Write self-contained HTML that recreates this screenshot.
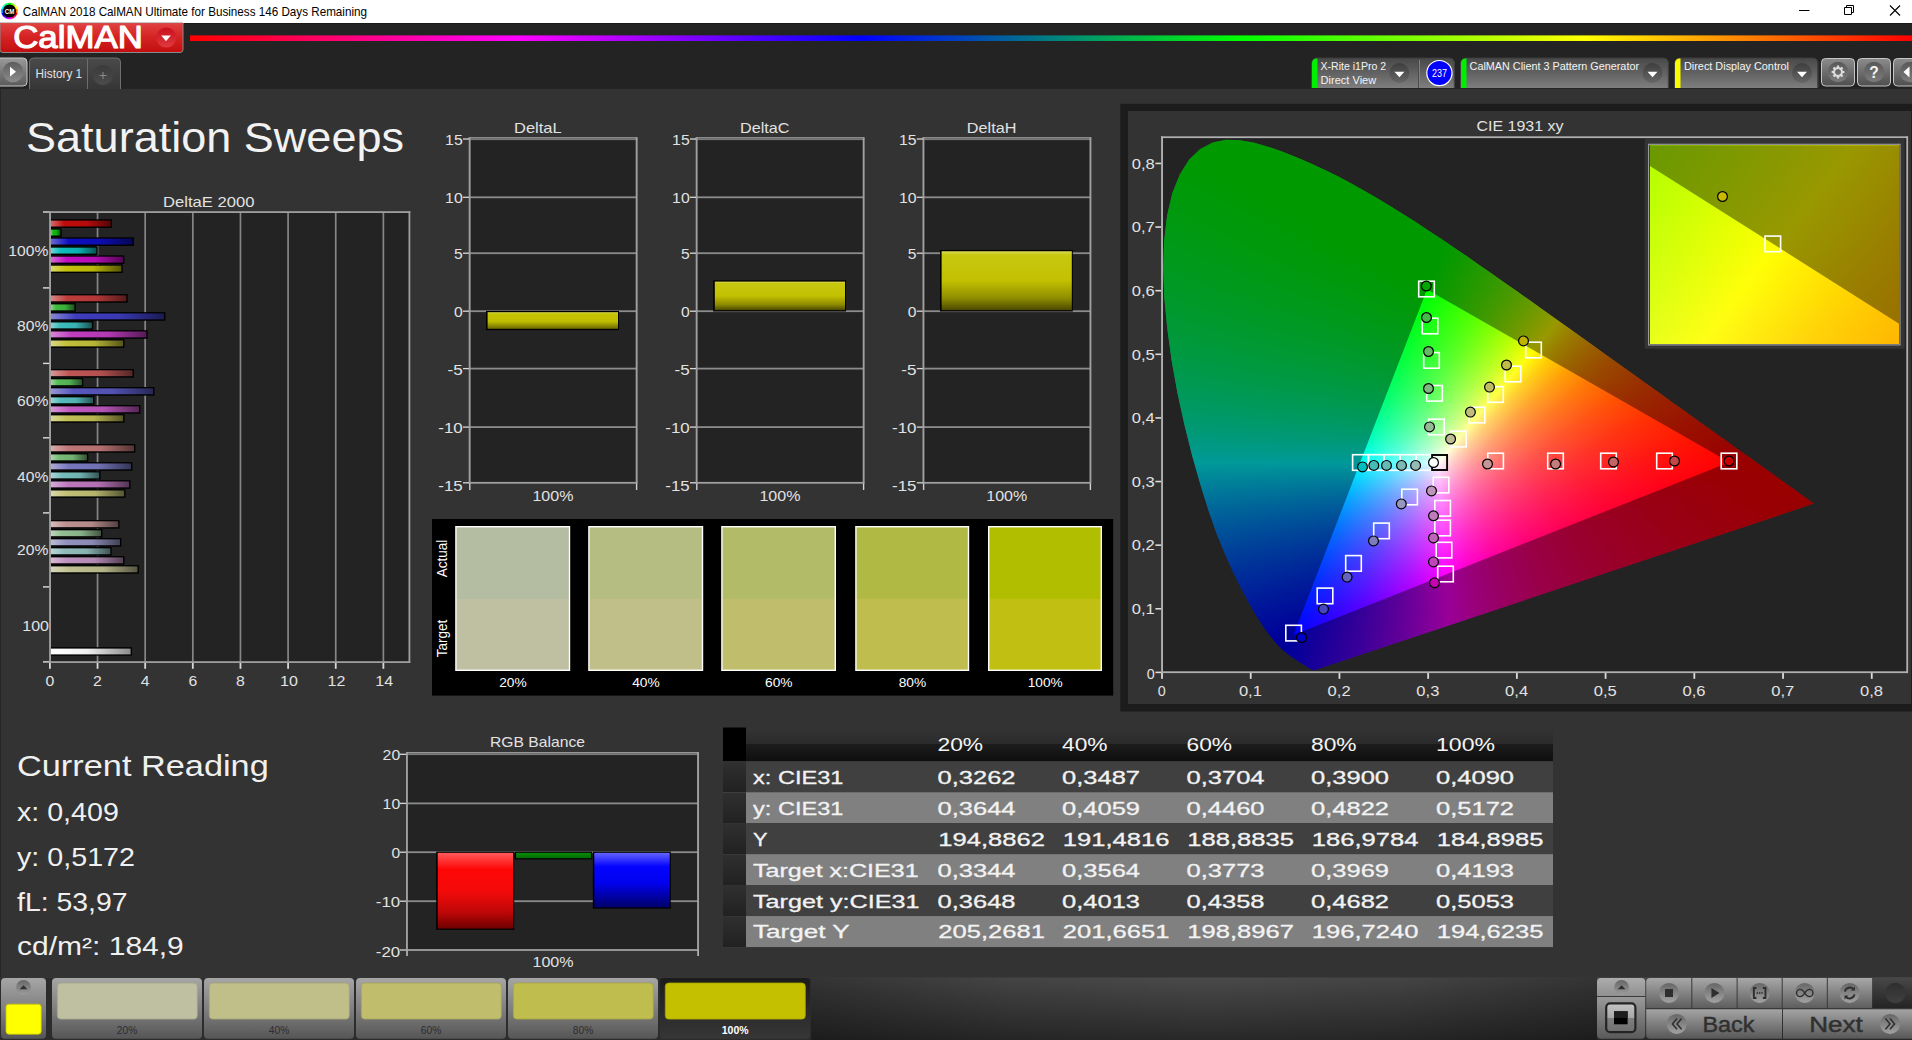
<!DOCTYPE html>
<html lang="en"><head><meta charset="utf-8"><title>CalMAN 2018 - Saturation Sweeps</title>
<style>
html,body{margin:0;padding:0;background:#333;}
body{width:1912px;height:1040px;overflow:hidden;position:relative;font-family:"Liberation Sans",sans-serif;}
.cg{position:absolute;overflow:hidden;}
.cg i{position:absolute;display:block;height:2px;}
svg text{white-space:pre;}
</style></head><body>
<svg width="1912" height="1040" viewBox="0 0 1912 1040" style="position:absolute;left:0;top:0;" font-family='"Liberation Sans", sans-serif'><defs><linearGradient id="g1" x1="0" y1="0" x2="1" y2="0"><stop offset="0" stop-color="#d76868"/><stop offset="0.22" stop-color="#c00c0c"/><stop offset="0.6" stop-color="#b40b0b"/><stop offset="1" stop-color="#560505"/></linearGradient><linearGradient id="g2" x1="0" y1="0" x2="1" y2="0"><stop offset="0" stop-color="#6ad46a"/><stop offset="0.22" stop-color="#10ba10"/><stop offset="0.6" stop-color="#0fae0f"/><stop offset="1" stop-color="#075307"/></linearGradient><linearGradient id="g3" x1="0" y1="0" x2="1" y2="0"><stop offset="0" stop-color="#6969d6"/><stop offset="0.22" stop-color="#0e0ebe"/><stop offset="0.6" stop-color="#0d0db2"/><stop offset="1" stop-color="#060655"/></linearGradient><linearGradient id="g4" x1="0" y1="0" x2="1" y2="0"><stop offset="0" stop-color="#69d5d5"/><stop offset="0.22" stop-color="#0ebcbc"/><stop offset="0.6" stop-color="#0db0b0"/><stop offset="1" stop-color="#065454"/></linearGradient><linearGradient id="g5" x1="0" y1="0" x2="1" y2="0"><stop offset="0" stop-color="#d769d7"/><stop offset="0.22" stop-color="#c00ec0"/><stop offset="0.6" stop-color="#b40db4"/><stop offset="1" stop-color="#560656"/></linearGradient><linearGradient id="g6" x1="0" y1="0" x2="1" y2="0"><stop offset="0" stop-color="#dad967"/><stop offset="0.22" stop-color="#c4c20a"/><stop offset="0.6" stop-color="#b8b609"/><stop offset="1" stop-color="#585704"/></linearGradient><linearGradient id="g7" x1="0" y1="0" x2="1" y2="0"><stop offset="0" stop-color="#d78686"/><stop offset="0.22" stop-color="#bf3c3c"/><stop offset="0.6" stop-color="#b33838"/><stop offset="1" stop-color="#561b1b"/></linearGradient><linearGradient id="g8" x1="0" y1="0" x2="1" y2="0"><stop offset="0" stop-color="#87d487"/><stop offset="0.22" stop-color="#3ebb3e"/><stop offset="0.6" stop-color="#3baf3b"/><stop offset="1" stop-color="#1c541c"/></linearGradient><linearGradient id="g9" x1="0" y1="0" x2="1" y2="0"><stop offset="0" stop-color="#8787d6"/><stop offset="0.22" stop-color="#3d3dbe"/><stop offset="0.6" stop-color="#3939b2"/><stop offset="1" stop-color="#1b1b55"/></linearGradient><linearGradient id="g10" x1="0" y1="0" x2="1" y2="0"><stop offset="0" stop-color="#87d5d5"/><stop offset="0.22" stop-color="#3dbcbc"/><stop offset="0.6" stop-color="#39b1b1"/><stop offset="1" stop-color="#1b5454"/></linearGradient><linearGradient id="g11" x1="0" y1="0" x2="1" y2="0"><stop offset="0" stop-color="#d787d7"/><stop offset="0.22" stop-color="#bf3dbf"/><stop offset="0.6" stop-color="#b339b3"/><stop offset="1" stop-color="#561b56"/></linearGradient><linearGradient id="g12" x1="0" y1="0" x2="1" y2="0"><stop offset="0" stop-color="#d9d885"/><stop offset="0.22" stop-color="#c2c03a"/><stop offset="0.6" stop-color="#b6b537"/><stop offset="1" stop-color="#57561a"/></linearGradient><linearGradient id="g13" x1="0" y1="0" x2="1" y2="0"><stop offset="0" stop-color="#d79696"/><stop offset="0.22" stop-color="#bf5656"/><stop offset="0.6" stop-color="#b35151"/><stop offset="1" stop-color="#562727"/></linearGradient><linearGradient id="g14" x1="0" y1="0" x2="1" y2="0"><stop offset="0" stop-color="#98d598"/><stop offset="0.22" stop-color="#59bb59"/><stop offset="0.6" stop-color="#53b053"/><stop offset="1" stop-color="#285428"/></linearGradient><linearGradient id="g15" x1="0" y1="0" x2="1" y2="0"><stop offset="0" stop-color="#9797d6"/><stop offset="0.22" stop-color="#5757be"/><stop offset="0.6" stop-color="#5252b2"/><stop offset="1" stop-color="#272755"/></linearGradient><linearGradient id="g16" x1="0" y1="0" x2="1" y2="0"><stop offset="0" stop-color="#97d5d5"/><stop offset="0.22" stop-color="#57bcbc"/><stop offset="0.6" stop-color="#52b1b1"/><stop offset="1" stop-color="#275454"/></linearGradient><linearGradient id="g17" x1="0" y1="0" x2="1" y2="0"><stop offset="0" stop-color="#d797d7"/><stop offset="0.22" stop-color="#bf57bf"/><stop offset="0.6" stop-color="#b352b3"/><stop offset="1" stop-color="#562756"/></linearGradient><linearGradient id="g18" x1="0" y1="0" x2="1" y2="0"><stop offset="0" stop-color="#d8d895"/><stop offset="0.22" stop-color="#c1c055"/><stop offset="0.6" stop-color="#b5b450"/><stop offset="1" stop-color="#575626"/></linearGradient><linearGradient id="g19" x1="0" y1="0" x2="1" y2="0"><stop offset="0" stop-color="#d7aaaa"/><stop offset="0.22" stop-color="#be7676"/><stop offset="0.6" stop-color="#b36f6f"/><stop offset="1" stop-color="#553535"/></linearGradient><linearGradient id="g20" x1="0" y1="0" x2="1" y2="0"><stop offset="0" stop-color="#abd5ab"/><stop offset="0.22" stop-color="#78bc78"/><stop offset="0.6" stop-color="#71b171"/><stop offset="1" stop-color="#365436"/></linearGradient><linearGradient id="g21" x1="0" y1="0" x2="1" y2="0"><stop offset="0" stop-color="#ababd6"/><stop offset="0.22" stop-color="#7777be"/><stop offset="0.6" stop-color="#7070b2"/><stop offset="1" stop-color="#353555"/></linearGradient><linearGradient id="g22" x1="0" y1="0" x2="1" y2="0"><stop offset="0" stop-color="#abd6d6"/><stop offset="0.22" stop-color="#77bdbd"/><stop offset="0.6" stop-color="#70b1b1"/><stop offset="1" stop-color="#355555"/></linearGradient><linearGradient id="g23" x1="0" y1="0" x2="1" y2="0"><stop offset="0" stop-color="#d7abd7"/><stop offset="0.22" stop-color="#be77be"/><stop offset="0.6" stop-color="#b370b3"/><stop offset="1" stop-color="#553555"/></linearGradient><linearGradient id="g24" x1="0" y1="0" x2="1" y2="0"><stop offset="0" stop-color="#d8d7aa"/><stop offset="0.22" stop-color="#c0bf76"/><stop offset="0.6" stop-color="#b4b46e"/><stop offset="1" stop-color="#565635"/></linearGradient><linearGradient id="g25" x1="0" y1="0" x2="1" y2="0"><stop offset="0" stop-color="#d7bbbb"/><stop offset="0.22" stop-color="#be9191"/><stop offset="0.6" stop-color="#b38888"/><stop offset="1" stop-color="#554141"/></linearGradient><linearGradient id="g26" x1="0" y1="0" x2="1" y2="0"><stop offset="0" stop-color="#bbd6bb"/><stop offset="0.22" stop-color="#92bd92"/><stop offset="0.6" stop-color="#89b189"/><stop offset="1" stop-color="#415541"/></linearGradient><linearGradient id="g27" x1="0" y1="0" x2="1" y2="0"><stop offset="0" stop-color="#bbbbd6"/><stop offset="0.22" stop-color="#9292be"/><stop offset="0.6" stop-color="#8989b2"/><stop offset="1" stop-color="#414155"/></linearGradient><linearGradient id="g28" x1="0" y1="0" x2="1" y2="0"><stop offset="0" stop-color="#bbd6d6"/><stop offset="0.22" stop-color="#92bdbd"/><stop offset="0.6" stop-color="#89b2b2"/><stop offset="1" stop-color="#415555"/></linearGradient><linearGradient id="g29" x1="0" y1="0" x2="1" y2="0"><stop offset="0" stop-color="#d7bbd7"/><stop offset="0.22" stop-color="#be92be"/><stop offset="0.6" stop-color="#b389b3"/><stop offset="1" stop-color="#554155"/></linearGradient><linearGradient id="g30" x1="0" y1="0" x2="1" y2="0"><stop offset="0" stop-color="#d7d7ba"/><stop offset="0.22" stop-color="#bfbf91"/><stop offset="0.6" stop-color="#b4b388"/><stop offset="1" stop-color="#565541"/></linearGradient><linearGradient id="g31" x1="0" y1="0" x2="1" y2="0"><stop offset="0" stop-color="#fff"/><stop offset="0.45" stop-color="#f0f0f0"/><stop offset="1" stop-color="#8c8c8c"/></linearGradient><linearGradient id="g32" x1="0" y1="0" x2="1" y2="0"><stop offset="0" stop-color="#ff0000"/><stop offset="0.19" stop-color="#ff00ff"/><stop offset="0.39" stop-color="#0000ff"/><stop offset="0.61" stop-color="#00ff00"/><stop offset="0.81" stop-color="#ffff00"/><stop offset="1" stop-color="#ff0000"/></linearGradient><linearGradient id="g33" x1="0" y1="0" x2="0" y2="1"><stop offset="0" stop-color="#e04444"/><stop offset="0.45" stop-color="#d62424"/><stop offset="1" stop-color="#c20e0e"/></linearGradient><linearGradient id="g34" x1="0" y1="0" x2="0" y2="1"><stop offset="0" stop-color="#c8101c"/><stop offset="1" stop-color="#e03a40"/></linearGradient><linearGradient id="g35" x1="0" y1="0" x2="0" y2="1"><stop offset="0" stop-color="#9a9a9a"/><stop offset="1" stop-color="#5a5a5a"/></linearGradient><linearGradient id="g36" x1="0" y1="0" x2="0" y2="1"><stop offset="0" stop-color="#5c5c5c"/><stop offset="1" stop-color="#8c8c8c"/></linearGradient><linearGradient id="g37" x1="0" y1="0" x2="0" y2="1"><stop offset="0" stop-color="#4a4a4a"/><stop offset="1" stop-color="#363636"/></linearGradient><linearGradient id="g38" x1="0" y1="0" x2="0" y2="1"><stop offset="0" stop-color="#3a3a3a"/><stop offset="1" stop-color="#4c4c4c"/></linearGradient><linearGradient id="g39" x1="0" y1="0" x2="0" y2="1"><stop offset="0" stop-color="#484848"/><stop offset="0.5" stop-color="#626262"/><stop offset="1" stop-color="#7e7e7e"/></linearGradient><linearGradient id="g40" x1="0" y1="0" x2="0" y2="1"><stop offset="0" stop-color="#3e3e3e"/><stop offset="1" stop-color="#666"/></linearGradient><linearGradient id="g41" x1="0" y1="0" x2="0" y2="1"><stop offset="0" stop-color="#484848"/><stop offset="0.5" stop-color="#626262"/><stop offset="1" stop-color="#7e7e7e"/></linearGradient><linearGradient id="g42" x1="0" y1="0" x2="0" y2="1"><stop offset="0" stop-color="#3e3e3e"/><stop offset="1" stop-color="#666"/></linearGradient><linearGradient id="g43" x1="0" y1="0" x2="0" y2="1"><stop offset="0" stop-color="#484848"/><stop offset="0.5" stop-color="#626262"/><stop offset="1" stop-color="#7e7e7e"/></linearGradient><linearGradient id="g44" x1="0" y1="0" x2="0" y2="1"><stop offset="0" stop-color="#3e3e3e"/><stop offset="1" stop-color="#666"/></linearGradient><linearGradient id="g45" x1="0" y1="0" x2="0" y2="1"><stop offset="0" stop-color="#8c8c8c"/><stop offset="1" stop-color="#4e4e4e"/></linearGradient><linearGradient id="g46" x1="0" y1="0" x2="0" y2="1"><stop offset="0" stop-color="#585858"/><stop offset="1" stop-color="#7c7c7c"/></linearGradient><linearGradient id="g47" x1="0" y1="0" x2="0" y2="1"><stop offset="0" stop-color="#8c8c8c"/><stop offset="1" stop-color="#4e4e4e"/></linearGradient><linearGradient id="g48" x1="0" y1="0" x2="0" y2="1"><stop offset="0" stop-color="#585858"/><stop offset="1" stop-color="#7c7c7c"/></linearGradient><linearGradient id="g49" x1="0" y1="0" x2="0" y2="1"><stop offset="0" stop-color="#8c8c8c"/><stop offset="1" stop-color="#4e4e4e"/></linearGradient><linearGradient id="g50" x1="0" y1="0" x2="0" y2="1"><stop offset="0" stop-color="#585858"/><stop offset="1" stop-color="#7c7c7c"/></linearGradient><linearGradient id="g51" x1="0" y1="0" x2="0" y2="1"><stop offset="0" stop-color="#d8d850"/><stop offset="0.12" stop-color="#c6c400"/><stop offset="0.55" stop-color="#c0be00"/><stop offset="1" stop-color="#6a6800"/></linearGradient><linearGradient id="g52" x1="0" y1="0" x2="0" y2="1"><stop offset="0" stop-color="#dcdc58"/><stop offset="0.06" stop-color="#c8c812"/><stop offset="0.5" stop-color="#c2c000"/><stop offset="0.8" stop-color="#8e8c00"/><stop offset="1" stop-color="#4a4800"/></linearGradient><linearGradient id="g53" x1="0" y1="0" x2="0" y2="1"><stop offset="0" stop-color="#dcdc58"/><stop offset="0.06" stop-color="#c8c812"/><stop offset="0.5" stop-color="#c2c000"/><stop offset="0.8" stop-color="#8e8c00"/><stop offset="1" stop-color="#4a4800"/></linearGradient><linearGradient id="g54" x1="0" y1="0" x2="0" y2="1"><stop offset="0" stop-color="#ff5a5a"/><stop offset="0.22" stop-color="#ff0606"/><stop offset="0.5" stop-color="#f40a0a"/><stop offset="0.78" stop-color="#c00808"/><stop offset="1" stop-color="#6e0000"/></linearGradient><linearGradient id="g55" x1="0" y1="0" x2="0" y2="1"><stop offset="0" stop-color="#0a8c0a"/><stop offset="1" stop-color="#006c00"/></linearGradient><linearGradient id="g56" x1="0" y1="0" x2="0" y2="1"><stop offset="0" stop-color="#6464ff"/><stop offset="0.25" stop-color="#0404ff"/><stop offset="0.55" stop-color="#0202ee"/><stop offset="1" stop-color="#00006a"/></linearGradient><linearGradient id="g57" x1="0" y1="0" x2="0" y2="1"><stop offset="0" stop-color="#343434"/><stop offset="0.5" stop-color="#2a2a2a"/><stop offset="0.5" stop-color="#1c1c1c"/><stop offset="1" stop-color="#0e0e0e"/></linearGradient><linearGradient id="g58" x1="0" y1="0" x2="0" y2="1"><stop offset="0" stop-color="#303030"/><stop offset="1" stop-color="#212121"/></linearGradient><linearGradient id="g59" x1="0" y1="0" x2="0" y2="1"><stop offset="0" stop-color="#4a4a4a"/><stop offset="1" stop-color="#282828"/></linearGradient><linearGradient id="g60" x1="0" y1="0" x2="1" y2="0"><stop offset="0" stop-color="#000" stop-opacity="0.3"/><stop offset="0.25" stop-color="#000" stop-opacity="0.08"/><stop offset="0.5" stop-color="#000" stop-opacity="0"/><stop offset="0.75" stop-color="#000" stop-opacity="0.08"/><stop offset="1" stop-color="#000" stop-opacity="0.3"/></linearGradient><linearGradient id="g61" x1="0" y1="0" x2="0" y2="1"><stop offset="0" stop-color="#484848"/><stop offset="1" stop-color="#242424"/></linearGradient><linearGradient id="g62" x1="0" y1="0" x2="0" y2="1"><stop offset="0" stop-color="#a6a6a6"/><stop offset="0.5" stop-color="#808080"/><stop offset="1" stop-color="#565656"/></linearGradient><linearGradient id="g63" x1="0" y1="0" x2="0" y2="1"><stop offset="0" stop-color="#666"/><stop offset="1" stop-color="#9c9c9c"/></linearGradient><linearGradient id="g64" x1="0" y1="0" x2="0" y2="1"><stop offset="0" stop-color="#a6a6a6"/><stop offset="0.5" stop-color="#808080"/><stop offset="1" stop-color="#565656"/></linearGradient><linearGradient id="g65" x1="0" y1="0" x2="0" y2="1"><stop offset="0" stop-color="#a6a6a6"/><stop offset="0.5" stop-color="#808080"/><stop offset="1" stop-color="#565656"/></linearGradient><linearGradient id="g66" x1="0" y1="0" x2="0" y2="1"><stop offset="0" stop-color="#a6a6a6"/><stop offset="0.5" stop-color="#808080"/><stop offset="1" stop-color="#565656"/></linearGradient><linearGradient id="g67" x1="0" y1="0" x2="0" y2="1"><stop offset="0" stop-color="#a6a6a6"/><stop offset="0.5" stop-color="#808080"/><stop offset="1" stop-color="#565656"/></linearGradient><linearGradient id="g68" x1="0" y1="0" x2="0" y2="1"><stop offset="0" stop-color="#1c1c1c"/><stop offset="1" stop-color="#363636"/></linearGradient><linearGradient id="g69" x1="0" y1="0" x2="0" y2="1"><stop offset="0" stop-color="#acacac"/><stop offset="0.3" stop-color="#909090"/><stop offset="0.31" stop-color="#9a9a9a"/><stop offset="1" stop-color="#5a5a5a"/></linearGradient><linearGradient id="g70" x1="0" y1="0" x2="0" y2="1"><stop offset="0" stop-color="#c4c4c4"/><stop offset="0.5" stop-color="#a8a8a8"/><stop offset="0.5" stop-color="#808080"/><stop offset="1" stop-color="#6e6e6e"/></linearGradient><linearGradient id="g71" x1="0" y1="0" x2="0" y2="1"><stop offset="0" stop-color="#a8a8a8"/><stop offset="1" stop-color="#5e5e5e"/></linearGradient><linearGradient id="g72" x1="0" y1="0" x2="0" y2="1"><stop offset="0" stop-color="#666"/><stop offset="1" stop-color="#a2a2a2"/></linearGradient><linearGradient id="g73" x1="0" y1="0" x2="0" y2="1"><stop offset="0" stop-color="#2e2e2e"/><stop offset="1" stop-color="#404040"/></linearGradient><linearGradient id="g74" x1="0" y1="0" x2="0" y2="1"><stop offset="0" stop-color="#a4a4a4"/><stop offset="1" stop-color="#585858"/></linearGradient></defs>
<rect x="0" y="89" width="1912" height="889" fill="#333"/>
<rect x="0" y="89" width="1" height="889" fill="#262626"/>
<text x="26" y="152" font-size="42.5" fill="#f2f2f2" textLength="378" lengthAdjust="spacingAndGlyphs">Saturation Sweeps</text>
<text x="208.7" y="207" font-size="15" fill="#e2e2e2" text-anchor="middle" textLength="91.5" lengthAdjust="spacingAndGlyphs">DeltaE 2000</text>
<rect x="50" y="212" width="359.4" height="450" fill="#232323"/>
<rect x="96.69" y="212" width="1.7" height="450" fill="#868686"/>
<rect x="144.33" y="212" width="1.7" height="450" fill="#868686"/>
<rect x="191.97" y="212" width="1.7" height="450" fill="#868686"/>
<rect x="239.61" y="212" width="1.7" height="450" fill="#868686"/>
<rect x="287.25" y="212" width="1.7" height="450" fill="#868686"/>
<rect x="334.89" y="212" width="1.7" height="450" fill="#868686"/>
<rect x="382.53" y="212" width="1.7" height="450" fill="#868686"/>
<rect x="49" y="211.2" width="361.3" height="1.8" fill="#9e9e9e"/>
<rect x="49" y="661.2" width="361.3" height="1.8" fill="#9e9e9e"/>
<rect x="49.1" y="211.2" width="1.9" height="451.8" fill="#9e9e9e"/>
<rect x="408.5" y="211.2" width="1.8" height="451.8" fill="#9e9e9e"/>
<rect x="43" y="211.3" width="6.2" height="1.4" fill="#dcdcdc"/>
<rect x="43" y="287.2" width="6.2" height="1.4" fill="#dcdcdc"/>
<rect x="43" y="362.7" width="6.2" height="1.4" fill="#dcdcdc"/>
<rect x="43" y="437.1" width="6.2" height="1.4" fill="#dcdcdc"/>
<rect x="43" y="512.2" width="6.2" height="1.4" fill="#dcdcdc"/>
<rect x="43" y="586.2" width="6.2" height="1.4" fill="#dcdcdc"/>
<rect x="43" y="661.2" width="6.2" height="1.4" fill="#dcdcdc"/>
<rect x="49" y="663" width="1.8" height="5.8" fill="#d8d8d8"/>
<text x="49.9" y="686.3" font-size="15.3" fill="#e2e2e2" text-anchor="middle" textLength="8.8" lengthAdjust="spacingAndGlyphs">0</text>
<rect x="96.64" y="663" width="1.8" height="5.8" fill="#d8d8d8"/>
<text x="97.54" y="686.3" font-size="15.3" fill="#e2e2e2" text-anchor="middle" textLength="8.8" lengthAdjust="spacingAndGlyphs">2</text>
<rect x="144.28" y="663" width="1.8" height="5.8" fill="#d8d8d8"/>
<text x="145.18" y="686.3" font-size="15.3" fill="#e2e2e2" text-anchor="middle" textLength="8.8" lengthAdjust="spacingAndGlyphs">4</text>
<rect x="191.92" y="663" width="1.8" height="5.8" fill="#d8d8d8"/>
<text x="192.82" y="686.3" font-size="15.3" fill="#e2e2e2" text-anchor="middle" textLength="8.8" lengthAdjust="spacingAndGlyphs">6</text>
<rect x="239.56" y="663" width="1.8" height="5.8" fill="#d8d8d8"/>
<text x="240.46" y="686.3" font-size="15.3" fill="#e2e2e2" text-anchor="middle" textLength="8.8" lengthAdjust="spacingAndGlyphs">8</text>
<rect x="287.2" y="663" width="1.8" height="5.8" fill="#d8d8d8"/>
<text x="288.9" y="686.3" font-size="15.3" fill="#e2e2e2" text-anchor="middle" textLength="17.8" lengthAdjust="spacingAndGlyphs">10</text>
<rect x="334.84" y="663" width="1.8" height="5.8" fill="#d8d8d8"/>
<text x="336.54" y="686.3" font-size="15.3" fill="#e2e2e2" text-anchor="middle" textLength="17.8" lengthAdjust="spacingAndGlyphs">12</text>
<rect x="382.48" y="663" width="1.8" height="5.8" fill="#d8d8d8"/>
<text x="384.18" y="686.3" font-size="15.3" fill="#e2e2e2" text-anchor="middle" textLength="17.8" lengthAdjust="spacingAndGlyphs">14</text>
<text x="48.3" y="256.3" font-size="15.3" fill="#e2e2e2" text-anchor="end" textLength="40" lengthAdjust="spacingAndGlyphs">100%</text>
<text x="48.3" y="330.7" font-size="15.3" fill="#e2e2e2" text-anchor="end" textLength="31.3" lengthAdjust="spacingAndGlyphs">80%</text>
<text x="48.3" y="405.7" font-size="15.3" fill="#e2e2e2" text-anchor="end" textLength="31.3" lengthAdjust="spacingAndGlyphs">60%</text>
<text x="48.3" y="481.9" font-size="15.3" fill="#e2e2e2" text-anchor="end" textLength="31.3" lengthAdjust="spacingAndGlyphs">40%</text>
<text x="48.3" y="555.1" font-size="15.3" fill="#e2e2e2" text-anchor="end" textLength="31.3" lengthAdjust="spacingAndGlyphs">20%</text>
<text x="49" y="631" font-size="15.3" fill="#e2e2e2" text-anchor="end" textLength="26.7" lengthAdjust="spacingAndGlyphs">100</text>
<rect x="51" y="219.3" width="61" height="8.6" fill="#000"/>
<rect x="51" y="220.6" width="59.6" height="5.9" fill="url(#g1)"/>
<rect x="51" y="228.32" width="10.7" height="8.6" fill="#000"/>
<rect x="51" y="229.62" width="9.3" height="5.9" fill="url(#g2)"/>
<rect x="51" y="237.34" width="82.9" height="8.6" fill="#000"/>
<rect x="51" y="238.64" width="81.5" height="5.9" fill="url(#g3)"/>
<rect x="51" y="246.36" width="46.7" height="8.6" fill="#000"/>
<rect x="51" y="247.66" width="45.3" height="5.9" fill="url(#g4)"/>
<rect x="51" y="255.38" width="73.4" height="8.6" fill="#000"/>
<rect x="51" y="256.68" width="72" height="5.9" fill="url(#g5)"/>
<rect x="51" y="264.4" width="71.7" height="8.6" fill="#000"/>
<rect x="51" y="265.7" width="70.3" height="5.9" fill="url(#g6)"/>
<rect x="51" y="294.1" width="76.7" height="8.6" fill="#000"/>
<rect x="51" y="295.4" width="75.3" height="5.9" fill="url(#g7)"/>
<rect x="51" y="303.12" width="24.8" height="8.6" fill="#000"/>
<rect x="51" y="304.42" width="23.4" height="5.9" fill="url(#g8)"/>
<rect x="51" y="312.14" width="114.4" height="8.6" fill="#000"/>
<rect x="51" y="313.44" width="113" height="5.9" fill="url(#g9)"/>
<rect x="51" y="321.16" width="42.3" height="8.6" fill="#000"/>
<rect x="51" y="322.46" width="40.9" height="5.9" fill="url(#g10)"/>
<rect x="51" y="330.18" width="96.7" height="8.6" fill="#000"/>
<rect x="51" y="331.48" width="95.3" height="5.9" fill="url(#g11)"/>
<rect x="51" y="339.2" width="73.5" height="8.6" fill="#000"/>
<rect x="51" y="340.5" width="72.1" height="5.9" fill="url(#g12)"/>
<rect x="51" y="369" width="82.9" height="8.6" fill="#000"/>
<rect x="51" y="370.3" width="81.5" height="5.9" fill="url(#g13)"/>
<rect x="51" y="378.02" width="32.3" height="8.6" fill="#000"/>
<rect x="51" y="379.32" width="30.9" height="5.9" fill="url(#g14)"/>
<rect x="51" y="387.04" width="103.5" height="8.6" fill="#000"/>
<rect x="51" y="388.34" width="102.1" height="5.9" fill="url(#g15)"/>
<rect x="51" y="396.06" width="43.5" height="8.6" fill="#000"/>
<rect x="51" y="397.36" width="42.1" height="5.9" fill="url(#g16)"/>
<rect x="51" y="405.08" width="89.4" height="8.6" fill="#000"/>
<rect x="51" y="406.38" width="88" height="5.9" fill="url(#g17)"/>
<rect x="51" y="414.1" width="73.5" height="8.6" fill="#000"/>
<rect x="51" y="415.4" width="72.1" height="5.9" fill="url(#g18)"/>
<rect x="51" y="444.1" width="84.4" height="8.6" fill="#000"/>
<rect x="51" y="445.4" width="83" height="5.9" fill="url(#g19)"/>
<rect x="51" y="453.12" width="37.3" height="8.6" fill="#000"/>
<rect x="51" y="454.42" width="35.9" height="5.9" fill="url(#g20)"/>
<rect x="51" y="462.14" width="81.4" height="8.6" fill="#000"/>
<rect x="51" y="463.44" width="80" height="5.9" fill="url(#g21)"/>
<rect x="51" y="471.16" width="49.5" height="8.6" fill="#000"/>
<rect x="51" y="472.46" width="48.1" height="5.9" fill="url(#g22)"/>
<rect x="51" y="480.18" width="79.5" height="8.6" fill="#000"/>
<rect x="51" y="481.48" width="78.1" height="5.9" fill="url(#g23)"/>
<rect x="51" y="489.2" width="74.5" height="8.6" fill="#000"/>
<rect x="51" y="490.5" width="73.1" height="5.9" fill="url(#g24)"/>
<rect x="51" y="520" width="68.5" height="8.6" fill="#000"/>
<rect x="51" y="521.3" width="67.1" height="5.9" fill="url(#g25)"/>
<rect x="51" y="529.02" width="51.4" height="8.6" fill="#000"/>
<rect x="51" y="530.32" width="50" height="5.9" fill="url(#g26)"/>
<rect x="51" y="538.04" width="70.4" height="8.6" fill="#000"/>
<rect x="51" y="539.34" width="69" height="5.9" fill="url(#g27)"/>
<rect x="51" y="547.06" width="60.7" height="8.6" fill="#000"/>
<rect x="51" y="548.36" width="59.3" height="5.9" fill="url(#g28)"/>
<rect x="51" y="556.08" width="73.5" height="8.6" fill="#000"/>
<rect x="51" y="557.38" width="72.1" height="5.9" fill="url(#g29)"/>
<rect x="51" y="565.1" width="87.9" height="8.6" fill="#000"/>
<rect x="51" y="566.4" width="86.5" height="5.9" fill="url(#g30)"/>
<rect x="51" y="647.2" width="80.9" height="8.5" fill="#000"/>
<rect x="51" y="648.6" width="79.6" height="5.8" fill="url(#g31)"/>
<rect x="0" y="0" width="1912" height="23" fill="#fff"/>
<path d="M9.5 11L7.21 3.02A8.3 8.3 0 0 1 11.79 3.02z" fill="#00ff00" />
<path d="M9.5 11L11.51 2.95A8.3 8.3 0 0 1 15.47 5.23z" fill="#7fff00" />
<path d="M9.5 11L15.27 5.03A8.3 8.3 0 0 1 17.55 8.99z" fill="#ffff00" />
<path d="M9.5 11L17.48 8.71A8.3 8.3 0 0 1 17.48 13.29z" fill="#ff7f00" />
<path d="M9.5 11L17.55 13.01A8.3 8.3 0 0 1 15.27 16.97z" fill="#ff0000" />
<path d="M9.5 11L15.47 16.77A8.3 8.3 0 0 1 11.51 19.05z" fill="#ff007f" />
<path d="M9.5 11L11.79 18.98A8.3 8.3 0 0 1 7.21 18.98z" fill="#ff00ff" />
<path d="M9.5 11L7.49 19.05A8.3 8.3 0 0 1 3.53 16.77z" fill="#7f00ff" />
<path d="M9.5 11L3.73 16.97A8.3 8.3 0 0 1 1.45 13.01z" fill="#0000ff" />
<path d="M9.5 11L1.52 13.29A8.3 8.3 0 0 1 1.52 8.71z" fill="#007fff" />
<path d="M9.5 11L1.45 8.99A8.3 8.3 0 0 1 3.73 5.03z" fill="#00ffff" />
<path d="M9.5 11L3.53 5.23A8.3 8.3 0 0 1 7.49 2.95z" fill="#00ff7f" />
<circle cx="9.5" cy="11" r="6.6" fill="#000"/>
<text x="9.5" y="13.6" font-size="7" fill="#fff" text-anchor="middle" textLength="9.5" lengthAdjust="spacingAndGlyphs" font-weight="bold">CM</text>
<text x="22.8" y="16" font-size="12.4" fill="#000" textLength="344.2" lengthAdjust="spacingAndGlyphs">CalMAN 2018 CalMAN Ultimate for Business 146 Days Remaining</text>
<rect x="1799" y="10" width="10.5" height="1" fill="#000"/>
<path d="M1844.5 7.5h7v7h-7z M1846.5 7.5v-2h7v7h-2" fill="none" stroke="#000" stroke-width="1" />
<path d="M1890 5.5l10 10M1900 5.5l-10 10" fill="none" stroke="#000" stroke-width="1.1" />
<rect x="0" y="23" width="1912" height="65.9" fill="#232323"/>
<rect x="0" y="23" width="1912" height="1" fill="#1a1a1a"/>
<rect x="190" y="35.4" width="1722" height="5.6" fill="url(#g32)"/>
<path d="M0 23H183V49.5a3 3 0 0 1 -3 3H3a3 3 0 0 1 -3 -3z" fill="url(#g33)" stroke="#8a8a8a" stroke-width="1" />
<rect x="0" y="23" width="183.5" height="1" fill="#d84a4a"/>
<text x="13.2" y="47.7" font-size="31.6" fill="#fff" textLength="129.6" lengthAdjust="spacingAndGlyphs" stroke="#fff" stroke-width="1.15" stroke-linejoin="round">CalMAN</text>
<circle cx="166.3" cy="37.6" r="10" fill="url(#g34)"/>
<path d="M161.2 35.6h9.6l-4.8 5.6z" fill="#fff" />
<path d="M-2 58H23a4 4 0 0 1 4 4V82a4 4 0 0 1 -4 4H-2z" fill="url(#g35)" stroke="#c8c8c8" stroke-width="1" />
<circle cx="13" cy="72" r="10.3" fill="url(#g36)"/>
<path d="M10 66.8l6 4.9l-6 4.9z" fill="#fff" />
<path d="M29.5 89V62a4 4 0 0 1 4 -4H116.5a4 4 0 0 1 4 4V89" fill="url(#g37)" stroke="#6e6e6e" stroke-width="1" />
<rect x="87" y="59" width="1" height="30" fill="#6e6e6e"/>
<text x="35.6" y="78" font-size="12.6" fill="#e4e4e4" textLength="46.6" lengthAdjust="spacingAndGlyphs">History 1</text>
<circle cx="103" cy="75" r="10" fill="url(#g38)"/>
<path d="M99.5 75.5h7M103 72v7" fill="none" stroke="#8a8a8a" stroke-width="1" />
<path d="M1311.5 88V63a5 5 0 0 1 5 -5H1449.8a5 5 0 0 1 5 5V88z" fill="url(#g39)" />
<path d="M1312 88V63a5 5 0 0 1 5 -5H1449.3a5 5 0 0 1 5 5V88" fill="none" stroke="#3c3c3c" stroke-width="1" />
<path d="M1312 88V63a4.5 4.5 0 0 1 4.5 -4.5H1317.5V88z" fill="#00ee00" />
<text x="1320.6" y="70" font-size="11.6" fill="#f4f4f4" textLength="65.4" lengthAdjust="spacingAndGlyphs">X-Rite i1Pro 2</text>
<text x="1320.6" y="83.8" font-size="11.6" fill="#f4f4f4" textLength="55.6" lengthAdjust="spacingAndGlyphs">Direct View</text>
<circle cx="1399.4" cy="73" r="10" fill="url(#g40)"/>
<path d="M1394.4 71.8h10l-5 5.4z" fill="#fff" />
<rect x="1418" y="60" width="1" height="28" fill="#4a4a4a"/>
<rect x="1419" y="60" width="1" height="28" fill="#808080"/>
<circle cx="1439.4" cy="73.1" r="12.6" fill="#0000ff" stroke="#fff" stroke-width="1.2"/>
<text x="1439.4" y="76.7" font-size="10.2" fill="#fff" text-anchor="middle" textLength="15" lengthAdjust="spacingAndGlyphs">237</text>
<path d="M1460.5 88V63a5 5 0 0 1 5 -5H1663.8a5 5 0 0 1 5 5V88z" fill="url(#g41)" />
<path d="M1461 88V63a5 5 0 0 1 5 -5H1663.3a5 5 0 0 1 5 5V88" fill="none" stroke="#3c3c3c" stroke-width="1" />
<path d="M1461 88V63a4.5 4.5 0 0 1 4.5 -4.5H1466.5V88z" fill="#00ee00" />
<text x="1469.6" y="69.8" font-size="11.6" fill="#f4f4f4" textLength="169.4" lengthAdjust="spacingAndGlyphs">CalMAN Client 3 Pattern Generator</text>
<circle cx="1652.5" cy="73" r="10" fill="url(#g42)"/>
<path d="M1647.5 71.8h10l-5 5.4z" fill="#fff" />
<path d="M1674.5 88V63a5 5 0 0 1 5 -5H1813.2a5 5 0 0 1 5 5V88z" fill="url(#g43)" />
<path d="M1675 88V63a5 5 0 0 1 5 -5H1812.7a5 5 0 0 1 5 5V88" fill="none" stroke="#3c3c3c" stroke-width="1" />
<path d="M1675 88V63a4.5 4.5 0 0 1 4.5 -4.5H1680.5V88z" fill="#fafa00" />
<text x="1684" y="69.8" font-size="11.6" fill="#f4f4f4" textLength="105" lengthAdjust="spacingAndGlyphs">Direct Display Control</text>
<circle cx="1802" cy="73" r="10" fill="url(#g44)"/>
<path d="M1797 71.8h10l-5 5.4z" fill="#fff" />
<rect x="1821.5" y="58.5" width="33" height="27.5" fill="url(#g45)" rx="4" stroke="#c6c6c6" stroke-width="1"/>
<circle cx="1838" cy="72" r="10.2" fill="url(#g46)"/>
<rect x="1857.5" y="58.5" width="33" height="27.5" fill="url(#g47)" rx="4" stroke="#c6c6c6" stroke-width="1"/>
<circle cx="1874" cy="72" r="10.2" fill="url(#g48)"/>
<rect x="1893.5" y="58.5" width="33" height="27.5" fill="url(#g49)" rx="4" stroke="#c6c6c6" stroke-width="1"/>
<circle cx="1910" cy="72" r="10.2" fill="url(#g50)"/>
<path d="M1844.41 70.90L1844.41 73.10L1842.72 73.31L1842.26 74.42L1843.31 75.75L1841.75 77.31L1840.42 76.26L1839.31 76.72L1839.10 78.41L1836.90 78.41L1836.69 76.72L1835.58 76.26L1834.25 77.31L1832.69 75.75L1833.74 74.42L1833.28 73.31L1831.59 73.10L1831.59 70.90L1833.28 70.69L1833.74 69.58L1832.69 68.25L1834.25 66.69L1835.58 67.74L1836.69 67.28L1836.90 65.59L1839.10 65.59L1839.31 67.28L1840.42 67.74L1841.75 66.69L1843.31 68.25L1842.26 69.58L1842.72 70.69z M1838 69a3 3 0 1 0 0.01 0z" fill="#dcdcdc" fill-rule="evenodd"/>
<text x="1874" y="77.9" font-size="15.6" fill="#f4f4f4" text-anchor="middle" font-weight="bold">?</text>
<path d="M1909.5 66.5l-6 5.5l6 5.5z" fill="#fff" />
<rect x="469.3" y="138" width="167.3" height="345" fill="#232323"/>
<rect x="469.3" y="196.4" width="167.3" height="1.8" fill="#8c8c8c"/>
<rect x="469.3" y="252.3" width="167.3" height="1.8" fill="#8c8c8c"/>
<rect x="469.3" y="310.3" width="167.3" height="1.8" fill="#8c8c8c"/>
<rect x="469.3" y="367.7" width="167.3" height="1.8" fill="#8c8c8c"/>
<rect x="469.3" y="426.2" width="167.3" height="1.8" fill="#8c8c8c"/>
<rect x="468.8" y="137.3" width="168.5" height="1.2" fill="#b0b0b0"/>
<rect x="468.8" y="138.7" width="168.5" height="1.4" fill="#7a7a7a"/>
<rect x="468.8" y="481.9" width="168.5" height="1.8" fill="#a0a0a0"/>
<rect x="468.7" y="137.3" width="1.9" height="346.4" fill="#a0a0a0"/>
<rect x="635.7" y="137.3" width="1.9" height="346.4" fill="#a0a0a0"/>
<rect x="469.1" y="483.5" width="1.4" height="6.5" fill="#d0d0d0"/>
<rect x="635.9" y="483.5" width="1.4" height="6.5" fill="#d0d0d0"/>
<rect x="463" y="138.35" width="6" height="1.3" fill="#d8d8d8"/>
<text x="462.7" y="145.1" font-size="14.8" fill="#e2e2e2" text-anchor="end" textLength="17.6" lengthAdjust="spacingAndGlyphs">15</text>
<rect x="463" y="196.65" width="6" height="1.3" fill="#d8d8d8"/>
<text x="462.7" y="203.4" font-size="14.8" fill="#e2e2e2" text-anchor="end" textLength="17.6" lengthAdjust="spacingAndGlyphs">10</text>
<rect x="463" y="252.55" width="6" height="1.3" fill="#d8d8d8"/>
<text x="462.7" y="259.3" font-size="14.8" fill="#e2e2e2" text-anchor="end" textLength="8.7" lengthAdjust="spacingAndGlyphs">5</text>
<rect x="463" y="310.55" width="6" height="1.3" fill="#d8d8d8"/>
<text x="462.7" y="317.3" font-size="14.8" fill="#e2e2e2" text-anchor="end" textLength="8.7" lengthAdjust="spacingAndGlyphs">0</text>
<rect x="463" y="367.95" width="6" height="1.3" fill="#d8d8d8"/>
<text x="462.7" y="374.7" font-size="14.8" fill="#e2e2e2" text-anchor="end" textLength="15.2" lengthAdjust="spacingAndGlyphs">-5</text>
<rect x="463" y="426.45" width="6" height="1.3" fill="#d8d8d8"/>
<text x="462.7" y="433.2" font-size="14.8" fill="#e2e2e2" text-anchor="end" textLength="24.4" lengthAdjust="spacingAndGlyphs">-10</text>
<rect x="463" y="482.15" width="6" height="1.3" fill="#d8d8d8"/>
<text x="462.7" y="490.6" font-size="14.8" fill="#e2e2e2" text-anchor="end" textLength="24.4" lengthAdjust="spacingAndGlyphs">-15</text>
<text x="537.8" y="133.2" font-size="15" fill="#e2e2e2" text-anchor="middle" textLength="47.5" lengthAdjust="spacingAndGlyphs">DeltaL</text>
<text x="552.95" y="500.6" font-size="15" fill="#e2e2e2" text-anchor="middle" textLength="41" lengthAdjust="spacingAndGlyphs">100%</text>
<rect x="486" y="310.9" width="133" height="19.23" fill="#000"/>
<rect x="487.6" y="312.2" width="130.4" height="16.63" fill="url(#g51)"/>
<rect x="696.3" y="138" width="167.3" height="345" fill="#232323"/>
<rect x="696.3" y="196.4" width="167.3" height="1.8" fill="#8c8c8c"/>
<rect x="696.3" y="252.3" width="167.3" height="1.8" fill="#8c8c8c"/>
<rect x="696.3" y="310.3" width="167.3" height="1.8" fill="#8c8c8c"/>
<rect x="696.3" y="367.7" width="167.3" height="1.8" fill="#8c8c8c"/>
<rect x="696.3" y="426.2" width="167.3" height="1.8" fill="#8c8c8c"/>
<rect x="695.8" y="137.3" width="168.5" height="1.2" fill="#b0b0b0"/>
<rect x="695.8" y="138.7" width="168.5" height="1.4" fill="#7a7a7a"/>
<rect x="695.8" y="481.9" width="168.5" height="1.8" fill="#a0a0a0"/>
<rect x="695.7" y="137.3" width="1.9" height="346.4" fill="#a0a0a0"/>
<rect x="862.7" y="137.3" width="1.9" height="346.4" fill="#a0a0a0"/>
<rect x="696.1" y="483.5" width="1.4" height="6.5" fill="#d0d0d0"/>
<rect x="862.9" y="483.5" width="1.4" height="6.5" fill="#d0d0d0"/>
<rect x="690" y="138.35" width="6" height="1.3" fill="#d8d8d8"/>
<text x="689.7" y="145.1" font-size="14.8" fill="#e2e2e2" text-anchor="end" textLength="17.6" lengthAdjust="spacingAndGlyphs">15</text>
<rect x="690" y="196.65" width="6" height="1.3" fill="#d8d8d8"/>
<text x="689.7" y="203.4" font-size="14.8" fill="#e2e2e2" text-anchor="end" textLength="17.6" lengthAdjust="spacingAndGlyphs">10</text>
<rect x="690" y="252.55" width="6" height="1.3" fill="#d8d8d8"/>
<text x="689.7" y="259.3" font-size="14.8" fill="#e2e2e2" text-anchor="end" textLength="8.7" lengthAdjust="spacingAndGlyphs">5</text>
<rect x="690" y="310.55" width="6" height="1.3" fill="#d8d8d8"/>
<text x="689.7" y="317.3" font-size="14.8" fill="#e2e2e2" text-anchor="end" textLength="8.7" lengthAdjust="spacingAndGlyphs">0</text>
<rect x="690" y="367.95" width="6" height="1.3" fill="#d8d8d8"/>
<text x="689.7" y="374.7" font-size="14.8" fill="#e2e2e2" text-anchor="end" textLength="15.2" lengthAdjust="spacingAndGlyphs">-5</text>
<rect x="690" y="426.45" width="6" height="1.3" fill="#d8d8d8"/>
<text x="689.7" y="433.2" font-size="14.8" fill="#e2e2e2" text-anchor="end" textLength="24.4" lengthAdjust="spacingAndGlyphs">-10</text>
<rect x="690" y="482.15" width="6" height="1.3" fill="#d8d8d8"/>
<text x="689.7" y="490.6" font-size="14.8" fill="#e2e2e2" text-anchor="end" textLength="24.4" lengthAdjust="spacingAndGlyphs">-15</text>
<text x="764.8" y="133.2" font-size="15" fill="#e2e2e2" text-anchor="middle" textLength="49.5" lengthAdjust="spacingAndGlyphs">DeltaC</text>
<text x="779.95" y="500.6" font-size="15" fill="#e2e2e2" text-anchor="middle" textLength="41" lengthAdjust="spacingAndGlyphs">100%</text>
<rect x="713.2" y="280.31" width="132.8" height="31.19" fill="#000"/>
<rect x="714.8" y="281.61" width="130.2" height="28.59" fill="url(#g52)"/>
<rect x="923.1" y="138" width="167.3" height="345" fill="#232323"/>
<rect x="923.1" y="196.4" width="167.3" height="1.8" fill="#8c8c8c"/>
<rect x="923.1" y="252.3" width="167.3" height="1.8" fill="#8c8c8c"/>
<rect x="923.1" y="310.3" width="167.3" height="1.8" fill="#8c8c8c"/>
<rect x="923.1" y="367.7" width="167.3" height="1.8" fill="#8c8c8c"/>
<rect x="923.1" y="426.2" width="167.3" height="1.8" fill="#8c8c8c"/>
<rect x="922.6" y="137.3" width="168.5" height="1.2" fill="#b0b0b0"/>
<rect x="922.6" y="138.7" width="168.5" height="1.4" fill="#7a7a7a"/>
<rect x="922.6" y="481.9" width="168.5" height="1.8" fill="#a0a0a0"/>
<rect x="922.5" y="137.3" width="1.9" height="346.4" fill="#a0a0a0"/>
<rect x="1089.5" y="137.3" width="1.9" height="346.4" fill="#a0a0a0"/>
<rect x="922.9" y="483.5" width="1.4" height="6.5" fill="#d0d0d0"/>
<rect x="1089.7" y="483.5" width="1.4" height="6.5" fill="#d0d0d0"/>
<rect x="916.8" y="138.35" width="6" height="1.3" fill="#d8d8d8"/>
<text x="916.5" y="145.1" font-size="14.8" fill="#e2e2e2" text-anchor="end" textLength="17.6" lengthAdjust="spacingAndGlyphs">15</text>
<rect x="916.8" y="196.65" width="6" height="1.3" fill="#d8d8d8"/>
<text x="916.5" y="203.4" font-size="14.8" fill="#e2e2e2" text-anchor="end" textLength="17.6" lengthAdjust="spacingAndGlyphs">10</text>
<rect x="916.8" y="252.55" width="6" height="1.3" fill="#d8d8d8"/>
<text x="916.5" y="259.3" font-size="14.8" fill="#e2e2e2" text-anchor="end" textLength="8.7" lengthAdjust="spacingAndGlyphs">5</text>
<rect x="916.8" y="310.55" width="6" height="1.3" fill="#d8d8d8"/>
<text x="916.5" y="317.3" font-size="14.8" fill="#e2e2e2" text-anchor="end" textLength="8.7" lengthAdjust="spacingAndGlyphs">0</text>
<rect x="916.8" y="367.95" width="6" height="1.3" fill="#d8d8d8"/>
<text x="916.5" y="374.7" font-size="14.8" fill="#e2e2e2" text-anchor="end" textLength="15.2" lengthAdjust="spacingAndGlyphs">-5</text>
<rect x="916.8" y="426.45" width="6" height="1.3" fill="#d8d8d8"/>
<text x="916.5" y="433.2" font-size="14.8" fill="#e2e2e2" text-anchor="end" textLength="24.4" lengthAdjust="spacingAndGlyphs">-10</text>
<rect x="916.8" y="482.15" width="6" height="1.3" fill="#d8d8d8"/>
<text x="916.5" y="490.6" font-size="14.8" fill="#e2e2e2" text-anchor="end" textLength="24.4" lengthAdjust="spacingAndGlyphs">-15</text>
<text x="991.6" y="133.2" font-size="15" fill="#e2e2e2" text-anchor="middle" textLength="49.5" lengthAdjust="spacingAndGlyphs">DeltaH</text>
<text x="1006.75" y="500.6" font-size="15" fill="#e2e2e2" text-anchor="middle" textLength="41" lengthAdjust="spacingAndGlyphs">100%</text>
<rect x="940" y="249.95" width="132.8" height="61.55" fill="#000"/>
<rect x="941.6" y="251.25" width="130.2" height="58.95" fill="url(#g53)"/>
<rect x="432" y="519" width="681.2" height="176.6" fill="#000"/>
<rect x="455.2" y="526" width="115" height="145" fill="#fff"/>
<rect x="456.6" y="527.4" width="112.2" height="71.6" fill="#b4bda2"/>
<rect x="456.6" y="598.8" width="112.2" height="70.8" fill="#bfbfa2"/>
<text x="512.9" y="686.8" font-size="12.6" fill="#fff" text-anchor="middle" textLength="27.5" lengthAdjust="spacingAndGlyphs">20%</text>
<rect x="588.2" y="526" width="115" height="145" fill="#fff"/>
<rect x="589.6" y="527.4" width="112.2" height="71.6" fill="#b5bd83"/>
<rect x="589.6" y="598.8" width="112.2" height="70.8" fill="#c0be89"/>
<text x="645.9" y="686.8" font-size="12.6" fill="#fff" text-anchor="middle" textLength="27.5" lengthAdjust="spacingAndGlyphs">40%</text>
<rect x="721.2" y="526" width="114.8" height="145" fill="#fff"/>
<rect x="722.6" y="527.4" width="112" height="71.6" fill="#b2bc68"/>
<rect x="722.6" y="598.8" width="112" height="70.8" fill="#c0bd6d"/>
<text x="778.8" y="686.8" font-size="12.6" fill="#fff" text-anchor="middle" textLength="27.5" lengthAdjust="spacingAndGlyphs">60%</text>
<rect x="855.2" y="526" width="114" height="145" fill="#fff"/>
<rect x="856.6" y="527.4" width="111.2" height="71.6" fill="#b1b945"/>
<rect x="856.6" y="598.8" width="111.2" height="70.8" fill="#bfbd4d"/>
<text x="912.4" y="686.8" font-size="12.6" fill="#fff" text-anchor="middle" textLength="27.5" lengthAdjust="spacingAndGlyphs">80%</text>
<rect x="988" y="526" width="114" height="145" fill="#fff"/>
<rect x="989.4" y="527.4" width="111.2" height="71.6" fill="#b1be00"/>
<rect x="989.4" y="598.8" width="111.2" height="70.8" fill="#c1bf11"/>
<text x="1045.2" y="686.8" font-size="12.6" fill="#fff" text-anchor="middle" textLength="35" lengthAdjust="spacingAndGlyphs">100%</text>
<text x="0" y="0" font-size="14" fill="#fff" text-anchor="middle" textLength="37.5" lengthAdjust="spacingAndGlyphs" transform="translate(447.2 558.5) rotate(-90)">Actual</text>
<text x="0" y="0" font-size="14" fill="#fff" text-anchor="middle" textLength="37.5" lengthAdjust="spacingAndGlyphs" transform="translate(447.2 638.6) rotate(-90)">Target</text>
<rect x="1120.3" y="103.8" width="800" height="607.7" fill="#1c1c1c"/>
<rect x="1128" y="111" width="783.2" height="593" fill="#333"/>
<text x="1520" y="130.6" font-size="15" fill="#e2e2e2" text-anchor="middle" textLength="87" lengthAdjust="spacingAndGlyphs">CIE 1931 xy</text>
<rect x="1161.2" y="136.4" width="746.6" height="536.6" fill="#232323"/>
<rect x="1155.4" y="671.6" width="6" height="1.6" fill="#dcdcdc"/>
<text x="1154.8" y="679.4" font-size="14.3" fill="#e2e2e2" text-anchor="end">0</text>
<rect x="1155.4" y="607.98" width="6" height="1.6" fill="#dcdcdc"/>
<text x="1154.8" y="613.98" font-size="14.3" fill="#e2e2e2" text-anchor="end" textLength="23" lengthAdjust="spacingAndGlyphs">0,1</text>
<rect x="1155.4" y="544.36" width="6" height="1.6" fill="#dcdcdc"/>
<text x="1154.8" y="550.36" font-size="14.3" fill="#e2e2e2" text-anchor="end" textLength="23" lengthAdjust="spacingAndGlyphs">0,2</text>
<rect x="1155.4" y="480.74" width="6" height="1.6" fill="#dcdcdc"/>
<text x="1154.8" y="486.74" font-size="14.3" fill="#e2e2e2" text-anchor="end" textLength="23" lengthAdjust="spacingAndGlyphs">0,3</text>
<rect x="1155.4" y="417.12" width="6" height="1.6" fill="#dcdcdc"/>
<text x="1154.8" y="423.12" font-size="14.3" fill="#e2e2e2" text-anchor="end" textLength="23" lengthAdjust="spacingAndGlyphs">0,4</text>
<rect x="1155.4" y="353.5" width="6" height="1.6" fill="#dcdcdc"/>
<text x="1154.8" y="359.5" font-size="14.3" fill="#e2e2e2" text-anchor="end" textLength="23" lengthAdjust="spacingAndGlyphs">0,5</text>
<rect x="1155.4" y="289.88" width="6" height="1.6" fill="#dcdcdc"/>
<text x="1154.8" y="295.88" font-size="14.3" fill="#e2e2e2" text-anchor="end" textLength="23" lengthAdjust="spacingAndGlyphs">0,6</text>
<rect x="1155.4" y="226.26" width="6" height="1.6" fill="#dcdcdc"/>
<text x="1154.8" y="232.26" font-size="14.3" fill="#e2e2e2" text-anchor="end" textLength="23" lengthAdjust="spacingAndGlyphs">0,7</text>
<rect x="1155.4" y="162.64" width="6" height="1.6" fill="#dcdcdc"/>
<text x="1154.8" y="168.64" font-size="14.3" fill="#e2e2e2" text-anchor="end" textLength="23" lengthAdjust="spacingAndGlyphs">0,8</text>
<rect x="1161.1" y="673" width="1.8" height="5.8" fill="#dcdcdc"/>
<text x="1161.7" y="695.7" font-size="14.3" fill="#e2e2e2" text-anchor="middle">0</text>
<rect x="1249.82" y="673" width="1.8" height="5.8" fill="#dcdcdc"/>
<text x="1250.42" y="695.7" font-size="14.3" fill="#e2e2e2" text-anchor="middle" textLength="23" lengthAdjust="spacingAndGlyphs">0,1</text>
<rect x="1338.54" y="673" width="1.8" height="5.8" fill="#dcdcdc"/>
<text x="1339.14" y="695.7" font-size="14.3" fill="#e2e2e2" text-anchor="middle" textLength="23" lengthAdjust="spacingAndGlyphs">0,2</text>
<rect x="1427.26" y="673" width="1.8" height="5.8" fill="#dcdcdc"/>
<text x="1427.86" y="695.7" font-size="14.3" fill="#e2e2e2" text-anchor="middle" textLength="23" lengthAdjust="spacingAndGlyphs">0,3</text>
<rect x="1515.98" y="673" width="1.8" height="5.8" fill="#dcdcdc"/>
<text x="1516.58" y="695.7" font-size="14.3" fill="#e2e2e2" text-anchor="middle" textLength="23" lengthAdjust="spacingAndGlyphs">0,4</text>
<rect x="1604.7" y="673" width="1.8" height="5.8" fill="#dcdcdc"/>
<text x="1605.3" y="695.7" font-size="14.3" fill="#e2e2e2" text-anchor="middle" textLength="23" lengthAdjust="spacingAndGlyphs">0,5</text>
<rect x="1693.42" y="673" width="1.8" height="5.8" fill="#dcdcdc"/>
<text x="1694.02" y="695.7" font-size="14.3" fill="#e2e2e2" text-anchor="middle" textLength="23" lengthAdjust="spacingAndGlyphs">0,6</text>
<rect x="1782.14" y="673" width="1.8" height="5.8" fill="#dcdcdc"/>
<text x="1782.74" y="695.7" font-size="14.3" fill="#e2e2e2" text-anchor="middle" textLength="23" lengthAdjust="spacingAndGlyphs">0,7</text>
<rect x="1870.86" y="673" width="1.8" height="5.8" fill="#dcdcdc"/>
<text x="1871.46" y="695.7" font-size="14.3" fill="#e2e2e2" text-anchor="middle" textLength="23" lengthAdjust="spacingAndGlyphs">0,8</text>
<text x="17" y="775.5" font-size="30.4" fill="#f0f0f0" textLength="251.8" lengthAdjust="spacingAndGlyphs">Current Reading</text>
<text x="17" y="821.3" font-size="25" fill="#f0f0f0" textLength="101.8" lengthAdjust="spacingAndGlyphs">x: 0,409</text>
<text x="17" y="865.5" font-size="25" fill="#f0f0f0" textLength="118" lengthAdjust="spacingAndGlyphs">y: 0,5172</text>
<text x="17" y="910.5" font-size="25" fill="#f0f0f0" textLength="110.5" lengthAdjust="spacingAndGlyphs">fL: 53,97</text>
<text x="17" y="955" font-size="25" fill="#f0f0f0" textLength="166.8" lengthAdjust="spacingAndGlyphs">cd/m²: 184,9</text>
<text x="537.5" y="747.1" font-size="15" fill="#e2e2e2" text-anchor="middle" textLength="95" lengthAdjust="spacingAndGlyphs">RGB Balance</text>
<rect x="407" y="753" width="291" height="197" fill="#232323"/>
<rect x="407" y="802.5" width="291" height="1.8" fill="#8c8c8c"/>
<rect x="407" y="851.3" width="291" height="1.8" fill="#8c8c8c"/>
<rect x="407" y="900.3" width="291" height="1.8" fill="#8c8c8c"/>
<rect x="406" y="752.2" width="293" height="1.3" fill="#b0b0b0"/>
<rect x="406" y="753.6" width="293" height="1.5" fill="#7a7a7a"/>
<rect x="406" y="949.1" width="293" height="1.8" fill="#a0a0a0"/>
<rect x="406" y="752.2" width="1.9" height="198.7" fill="#a0a0a0"/>
<rect x="697.1" y="752.2" width="1.9" height="198.7" fill="#a0a0a0"/>
<rect x="406.3" y="950.5" width="1.4" height="5.5" fill="#d0d0d0"/>
<rect x="697.4" y="950.5" width="1.4" height="5.5" fill="#d0d0d0"/>
<rect x="400" y="753.65" width="6" height="1.3" fill="#d8d8d8"/>
<text x="400.2" y="759.7" font-size="14.8" fill="#e2e2e2" text-anchor="end" textLength="17.6" lengthAdjust="spacingAndGlyphs">20</text>
<rect x="400" y="802.75" width="6" height="1.3" fill="#d8d8d8"/>
<text x="400.2" y="808.8" font-size="14.8" fill="#e2e2e2" text-anchor="end" textLength="17.6" lengthAdjust="spacingAndGlyphs">10</text>
<rect x="400" y="851.55" width="6" height="1.3" fill="#d8d8d8"/>
<text x="400.2" y="857.6" font-size="14.8" fill="#e2e2e2" text-anchor="end" textLength="8.7" lengthAdjust="spacingAndGlyphs">0</text>
<rect x="400" y="900.55" width="6" height="1.3" fill="#d8d8d8"/>
<text x="400.2" y="906.6" font-size="14.8" fill="#e2e2e2" text-anchor="end" textLength="24.4" lengthAdjust="spacingAndGlyphs">-10</text>
<rect x="400" y="949.35" width="6" height="1.3" fill="#d8d8d8"/>
<text x="400.2" y="957.2" font-size="14.8" fill="#e2e2e2" text-anchor="end" textLength="24.4" lengthAdjust="spacingAndGlyphs">-20</text>
<text x="553" y="967.1" font-size="15" fill="#e2e2e2" text-anchor="middle" textLength="41" lengthAdjust="spacingAndGlyphs">100%</text>
<rect x="436.2" y="851.6" width="78" height="78.2" fill="#000"/>
<rect x="437.7" y="852.8" width="75.4" height="75.8" fill="url(#g54)"/>
<rect x="514.6" y="851.6" width="77.4" height="7.8" fill="#000"/>
<rect x="516.1" y="852.8" width="74.8" height="5.4" fill="url(#g55)"/>
<rect x="592.8" y="851.6" width="78" height="57" fill="#000"/>
<rect x="594.3" y="852.8" width="75.4" height="54.6" fill="url(#g56)"/>
<rect x="723" y="727.5" width="830" height="33.8" fill="url(#g57)"/>
<rect x="723" y="727.5" width="23" height="33.8" fill="#000"/>
<text x="937.5" y="750.9" font-size="17.6" fill="#f4f4f4" textLength="45.6" lengthAdjust="spacingAndGlyphs">20%</text>
<text x="1062" y="750.9" font-size="17.6" fill="#f4f4f4" textLength="45.6" lengthAdjust="spacingAndGlyphs">40%</text>
<text x="1186.5" y="750.9" font-size="17.6" fill="#f4f4f4" textLength="45.6" lengthAdjust="spacingAndGlyphs">60%</text>
<text x="1311" y="750.9" font-size="17.6" fill="#f4f4f4" textLength="45.6" lengthAdjust="spacingAndGlyphs">80%</text>
<text x="1436" y="750.9" font-size="17.6" fill="#f4f4f4" textLength="59" lengthAdjust="spacingAndGlyphs">100%</text>
<rect x="723" y="761.3" width="830" height="31" fill="#404040"/>
<rect x="723" y="761.3" width="23" height="31" fill="url(#g58)"/>
<text x="753" y="783.7" font-size="18" fill="#f2f2f2" textLength="90.5" lengthAdjust="spacingAndGlyphs" stroke="#f2f2f2" stroke-width=".3">x: CIE31</text>
<text x="937.5" y="783.7" font-size="18" fill="#f2f2f2" textLength="78" lengthAdjust="spacingAndGlyphs" stroke="#f2f2f2" stroke-width=".3">0,3262</text>
<text x="1062" y="783.7" font-size="18" fill="#f2f2f2" textLength="78" lengthAdjust="spacingAndGlyphs" stroke="#f2f2f2" stroke-width=".3">0,3487</text>
<text x="1186.5" y="783.7" font-size="18" fill="#f2f2f2" textLength="78" lengthAdjust="spacingAndGlyphs" stroke="#f2f2f2" stroke-width=".3">0,3704</text>
<text x="1311" y="783.7" font-size="18" fill="#f2f2f2" textLength="78" lengthAdjust="spacingAndGlyphs" stroke="#f2f2f2" stroke-width=".3">0,3900</text>
<text x="1436" y="783.7" font-size="18" fill="#f2f2f2" textLength="78" lengthAdjust="spacingAndGlyphs" stroke="#f2f2f2" stroke-width=".3">0,4090</text>
<rect x="723" y="792.25" width="830" height="31" fill="#808080"/>
<rect x="723" y="792.25" width="23" height="31" fill="url(#g58)"/>
<text x="753" y="814.65" font-size="18" fill="#f2f2f2" textLength="90.5" lengthAdjust="spacingAndGlyphs" stroke="#f2f2f2" stroke-width=".3">y: CIE31</text>
<text x="937.5" y="814.65" font-size="18" fill="#f2f2f2" textLength="78" lengthAdjust="spacingAndGlyphs" stroke="#f2f2f2" stroke-width=".3">0,3644</text>
<text x="1062" y="814.65" font-size="18" fill="#f2f2f2" textLength="78" lengthAdjust="spacingAndGlyphs" stroke="#f2f2f2" stroke-width=".3">0,4059</text>
<text x="1186.5" y="814.65" font-size="18" fill="#f2f2f2" textLength="78" lengthAdjust="spacingAndGlyphs" stroke="#f2f2f2" stroke-width=".3">0,4460</text>
<text x="1311" y="814.65" font-size="18" fill="#f2f2f2" textLength="78" lengthAdjust="spacingAndGlyphs" stroke="#f2f2f2" stroke-width=".3">0,4822</text>
<text x="1436" y="814.65" font-size="18" fill="#f2f2f2" textLength="78" lengthAdjust="spacingAndGlyphs" stroke="#f2f2f2" stroke-width=".3">0,5172</text>
<rect x="723" y="823.2" width="830" height="31" fill="#404040"/>
<rect x="723" y="823.2" width="23" height="31" fill="url(#g58)"/>
<text x="753" y="845.6" font-size="18" fill="#f2f2f2" textLength="14.5" lengthAdjust="spacingAndGlyphs" stroke="#f2f2f2" stroke-width=".3">Y</text>
<text x="938.3" y="845.6" font-size="18" fill="#f2f2f2" textLength="106.6" lengthAdjust="spacingAndGlyphs" stroke="#f2f2f2" stroke-width=".3">194,8862</text>
<text x="1062.8" y="845.6" font-size="18" fill="#f2f2f2" textLength="106.6" lengthAdjust="spacingAndGlyphs" stroke="#f2f2f2" stroke-width=".3">191,4816</text>
<text x="1187.3" y="845.6" font-size="18" fill="#f2f2f2" textLength="106.6" lengthAdjust="spacingAndGlyphs" stroke="#f2f2f2" stroke-width=".3">188,8835</text>
<text x="1311.8" y="845.6" font-size="18" fill="#f2f2f2" textLength="106.6" lengthAdjust="spacingAndGlyphs" stroke="#f2f2f2" stroke-width=".3">186,9784</text>
<text x="1436.8" y="845.6" font-size="18" fill="#f2f2f2" textLength="106.6" lengthAdjust="spacingAndGlyphs" stroke="#f2f2f2" stroke-width=".3">184,8985</text>
<rect x="723" y="854.15" width="830" height="31" fill="#808080"/>
<rect x="723" y="854.15" width="23" height="31" fill="url(#g58)"/>
<text x="753" y="876.55" font-size="18" fill="#f2f2f2" textLength="165.6" lengthAdjust="spacingAndGlyphs" stroke="#f2f2f2" stroke-width=".3">Target x:CIE31</text>
<text x="937.5" y="876.55" font-size="18" fill="#f2f2f2" textLength="78" lengthAdjust="spacingAndGlyphs" stroke="#f2f2f2" stroke-width=".3">0,3344</text>
<text x="1062" y="876.55" font-size="18" fill="#f2f2f2" textLength="78" lengthAdjust="spacingAndGlyphs" stroke="#f2f2f2" stroke-width=".3">0,3564</text>
<text x="1186.5" y="876.55" font-size="18" fill="#f2f2f2" textLength="78" lengthAdjust="spacingAndGlyphs" stroke="#f2f2f2" stroke-width=".3">0,3773</text>
<text x="1311" y="876.55" font-size="18" fill="#f2f2f2" textLength="78" lengthAdjust="spacingAndGlyphs" stroke="#f2f2f2" stroke-width=".3">0,3969</text>
<text x="1436" y="876.55" font-size="18" fill="#f2f2f2" textLength="78" lengthAdjust="spacingAndGlyphs" stroke="#f2f2f2" stroke-width=".3">0,4193</text>
<rect x="723" y="885.1" width="830" height="31" fill="#404040"/>
<rect x="723" y="885.1" width="23" height="31" fill="url(#g58)"/>
<text x="753" y="907.5" font-size="18" fill="#f2f2f2" textLength="166.5" lengthAdjust="spacingAndGlyphs" stroke="#f2f2f2" stroke-width=".3">Target y:CIE31</text>
<text x="937.5" y="907.5" font-size="18" fill="#f2f2f2" textLength="78" lengthAdjust="spacingAndGlyphs" stroke="#f2f2f2" stroke-width=".3">0,3648</text>
<text x="1062" y="907.5" font-size="18" fill="#f2f2f2" textLength="78" lengthAdjust="spacingAndGlyphs" stroke="#f2f2f2" stroke-width=".3">0,4013</text>
<text x="1186.5" y="907.5" font-size="18" fill="#f2f2f2" textLength="78" lengthAdjust="spacingAndGlyphs" stroke="#f2f2f2" stroke-width=".3">0,4358</text>
<text x="1311" y="907.5" font-size="18" fill="#f2f2f2" textLength="78" lengthAdjust="spacingAndGlyphs" stroke="#f2f2f2" stroke-width=".3">0,4682</text>
<text x="1436" y="907.5" font-size="18" fill="#f2f2f2" textLength="78" lengthAdjust="spacingAndGlyphs" stroke="#f2f2f2" stroke-width=".3">0,5053</text>
<rect x="723" y="916.05" width="830" height="31" fill="#808080"/>
<rect x="723" y="916.05" width="23" height="31" fill="url(#g58)"/>
<text x="753" y="938.45" font-size="18" fill="#f2f2f2" textLength="96.6" lengthAdjust="spacingAndGlyphs" stroke="#f2f2f2" stroke-width=".3">Target Y</text>
<text x="938.3" y="938.45" font-size="18" fill="#f2f2f2" textLength="106.6" lengthAdjust="spacingAndGlyphs" stroke="#f2f2f2" stroke-width=".3">205,2681</text>
<text x="1062.8" y="938.45" font-size="18" fill="#f2f2f2" textLength="106.6" lengthAdjust="spacingAndGlyphs" stroke="#f2f2f2" stroke-width=".3">201,6651</text>
<text x="1187.3" y="938.45" font-size="18" fill="#f2f2f2" textLength="106.6" lengthAdjust="spacingAndGlyphs" stroke="#f2f2f2" stroke-width=".3">198,8967</text>
<text x="1311.8" y="938.45" font-size="18" fill="#f2f2f2" textLength="106.6" lengthAdjust="spacingAndGlyphs" stroke="#f2f2f2" stroke-width=".3">196,7240</text>
<text x="1436.8" y="938.45" font-size="18" fill="#f2f2f2" textLength="106.6" lengthAdjust="spacingAndGlyphs" stroke="#f2f2f2" stroke-width=".3">194,6235</text>
<rect x="0" y="977.5" width="1912" height="62.5" fill="url(#g59)"/>
<rect x="0" y="977.5" width="811" height="62.5" fill="#2c2c2c"/>
<rect x="811" y="977.5" width="786" height="62.5" fill="url(#g60)"/>
<rect x="1872.1" y="977.5" width="40" height="30.5" fill="url(#g61)"/>
<rect x="1" y="978" width="45" height="60.7" fill="url(#g62)" rx="4"/>
<circle cx="23.5" cy="987.3" r="7.4" fill="url(#g63)"/>
<path d="M19.6 989.2l3.9-4l3.9 4z" fill="#303030" />
<rect x="6" y="1004.2" width="35.2" height="30" fill="#ffff00" rx="3" stroke="#c8c800" stroke-width="0.8"/>
<rect x="52" y="978" width="150" height="60.7" fill="url(#g64)" rx="4"/>
<rect x="57.3" y="983" width="140" height="36.1" fill="#bfbfa2" rx="3.5" stroke="#a4a48b" stroke-width="0.8"/>
<text x="127" y="1033.8" font-size="10.8" fill="#2c2c34" text-anchor="middle" textLength="20.5" lengthAdjust="spacingAndGlyphs">20%</text>
<rect x="204" y="978" width="150" height="60.7" fill="url(#g65)" rx="4"/>
<rect x="209.3" y="983" width="140" height="36.1" fill="#c0be89" rx="3.5" stroke="#a5a375" stroke-width="0.8"/>
<text x="279" y="1033.8" font-size="10.8" fill="#2c2c34" text-anchor="middle" textLength="20.5" lengthAdjust="spacingAndGlyphs">40%</text>
<rect x="356" y="978" width="150" height="60.7" fill="url(#g66)" rx="4"/>
<rect x="361.3" y="983" width="140" height="36.1" fill="#c0bd6d" rx="3.5" stroke="#a5a25d" stroke-width="0.8"/>
<text x="431" y="1033.8" font-size="10.8" fill="#2c2c34" text-anchor="middle" textLength="20.5" lengthAdjust="spacingAndGlyphs">60%</text>
<rect x="508" y="978" width="150" height="60.7" fill="url(#g67)" rx="4"/>
<rect x="513.3" y="983" width="140" height="36.1" fill="#bfbd4d" rx="3.5" stroke="#a4a242" stroke-width="0.8"/>
<text x="583" y="1033.8" font-size="10.8" fill="#2c2c34" text-anchor="middle" textLength="20.5" lengthAdjust="spacingAndGlyphs">80%</text>
<rect x="660" y="978" width="150" height="60.7" fill="url(#g68)" rx="4"/>
<rect x="665.3" y="983" width="140" height="36.1" fill="#c4c000" rx="3.5" stroke="#a8a500" stroke-width="0.8"/>
<text x="735.2" y="1033.8" font-size="10.8" fill="#fff" text-anchor="middle" textLength="26.8" lengthAdjust="spacingAndGlyphs" font-weight="bold">100%</text>
<rect x="1597" y="978" width="48.2" height="60.7" fill="url(#g69)" rx="4"/>
<rect x="1597" y="996" width="48.2" height="1" fill="#3c3c3c"/>
<circle cx="1621.6" cy="987.3" r="7.4" fill="url(#g63)"/>
<path d="M1617.7 989.2l3.9-4l3.9 4z" fill="#303030" />
<rect x="1606.2" y="1003.4" width="29.2" height="28.8" fill="url(#g70)" rx="4" stroke="#242424" stroke-width="2.2"/>
<rect x="1614" y="1011.3" width="13.6" height="13" fill="#000"/>
<rect x="1614" y="1011.3" width="13.6" height="6.6" fill="#1e1e1e"/>
<path d="M1646.2 1007.9V982a4 4 0 0 1 4-4H1872.1V1007.9z" fill="url(#g71)" />
<rect x="1691.3" y="978" width="1" height="30" fill="#3a3a3a"/>
<rect x="1736.6" y="978" width="1" height="30" fill="#3a3a3a"/>
<rect x="1781.7" y="978" width="1" height="30" fill="#3a3a3a"/>
<rect x="1826.8" y="978" width="1" height="30" fill="#3a3a3a"/>
<circle cx="1669" cy="992.9" r="10" fill="url(#g72)"/>
<circle cx="1714.45" cy="992.9" r="10" fill="url(#g72)"/>
<circle cx="1759.65" cy="992.9" r="10" fill="url(#g72)"/>
<circle cx="1804.75" cy="992.9" r="10" fill="url(#g72)"/>
<circle cx="1849.7" cy="992.9" r="10" fill="url(#g72)"/>
<rect x="1665" y="989" width="8" height="8" fill="#2e2e2e"/>
<path d="M1711.45 988l8 5l-8 5z" fill="#2e2e2e" />
<path d="M1756.45 988h-2.6v10h2.6M1762.85 988h2.6v10h-2.6" fill="none" stroke="#2e2e2e" stroke-width="1.9" />
<rect x="1756.65" y="992.2" width="1.4" height="1.6" fill="#2e2e2e"/>
<rect x="1758.95" y="992.2" width="1.4" height="1.6" fill="#2e2e2e"/>
<rect x="1761.25" y="992.2" width="1.4" height="1.6" fill="#2e2e2e"/>
<path d="M1804.75 993c-1.6-2.6-3.4-3.6-4.6-3.6a3.4 3.4 0 0 0 0 7.2c1.2 0 3-1 4.6-3.6c1.6 2.6 3.4 3.6 4.6 3.6a3.4 3.4 0 0 0 0-7.2c-1.2 0-3 1-4.6 3.6z" fill="none" stroke="#2e2e2e" stroke-width="1.4" />
<path d="M1844.9 991.6a5 5 0 0 1 8.6-2.4 M1854.5 994.4a5 5 0 0 1 -8.6 2.4" fill="none" stroke="#2e2e2e" stroke-width="1.9" />
<path d="M1854.9 986.6v4h-4z M1844.5 999.4v-4h4z" fill="#2e2e2e" />
<circle cx="1895.4" cy="993" r="10.2" fill="url(#g73)"/>
<path d="M1646.2 1009.3H1782V1038.7H1650.2a4 4 0 0 1 -4-4z" fill="url(#g74)" />
<rect x="1783" y="1009.3" width="140" height="29.4" fill="url(#g74)"/>
<circle cx="1676.7" cy="1023.9" r="10" fill="url(#g72)"/>
<circle cx="1890.1" cy="1023.9" r="10" fill="url(#g72)"/>
<path d="M1677 1018.6l-4.6 5.3l4.6 5.3M1681.6 1018.6l-4.6 5.3l4.6 5.3" fill="none" stroke="#2e2e2e" stroke-width="1.5" />
<path d="M1885.4 1018.6l4.6 5.3l-4.6 5.3M1890 1018.6l4.6 5.3l-4.6 5.3" fill="none" stroke="#2e2e2e" stroke-width="1.5" />
<text x="1702.4" y="1032" font-size="21.4" fill="#303030" textLength="52" lengthAdjust="spacingAndGlyphs" stroke="#303030" stroke-width=".45">Back</text>
<text x="1809.2" y="1032" font-size="21.4" fill="#303030" textLength="53.6" lengthAdjust="spacingAndGlyphs" stroke="#303030" stroke-width=".45">Next</text>
</svg>
<div class="cg" style="left:1163px;top:138px;width:745px;height:534px;clip-path:polygon(151.9px 532.1px,151.9px 532.1px,151.9px 532.1px,151.8px 532.1px,151.7px 532.1px,151.7px 532.2px,151.6px 532.1px,151.5px 532.1px,151.4px 532.2px,151.3px 532.2px,151.3px 532.2px,151.2px 532.2px,151.0px 532.2px,150.9px 532.2px,150.7px 532.2px,150.6px 532.2px,150.4px 532.2px,150.2px 532.2px,150.0px 532.2px,149.8px 532.1px,149.5px 532.0px,149.2px 531.9px,148.8px 531.7px,148.3px 531.5px,147.8px 531.2px,147.3px 530.9px,146.6px 530.5px,145.9px 530.1px,145.1px 529.6px,144.3px 529.0px,143.3px 528.4px,142.2px 527.7px,141.0px 526.9px,139.7px 526.0px,138.1px 525.1px,136.4px 524.0px,134.5px 522.8px,132.5px 521.5px,130.2px 520.0px,127.8px 518.3px,125.1px 516.3px,122.3px 514.1px,119.2px 511.4px,115.8px 508.0px,111.9px 503.7px,107.5px 498.3px,102.6px 491.9px,97.4px 484.2px,91.6px 474.8px,85.2px 463.6px,78.2px 450.4px,70.6px 434.9px,62.4px 416.9px,53.9px 396.2px,45.6px 372.7px,37.4px 346.6px,29.2px 317.8px,21.5px 287.1px,14.5px 255.2px,8.7px 222.9px,4.3px 190.8px,1.3px 159.7px,0.2px 130.3px,1.1px 102.9px,4.1px 77.6px,9.3px 55.3px,16.8px 36.5px,26.2px 21.6px,37.3px 11.1px,49.8px 4.6px,63.1px 1.8px,77.0px 2.2px,91.3px 4.8px,105.9px 8.9px,120.4px 14.0px,134.7px 19.7px,148.5px 25.7px,162.0px 32.0px,175.3px 38.6px,188.4px 45.5px,201.3px 52.7px,214.3px 60.2px,227.1px 67.9px,239.9px 75.9px,252.7px 84.0px,265.4px 92.4px,278.1px 100.8px,290.9px 109.4px,303.6px 118.1px,316.3px 126.9px,329.0px 135.8px,341.7px 144.7px,354.4px 153.6px,367.1px 162.5px,379.6px 171.5px,392.2px 180.4px,404.6px 189.3px,416.9px 198.1px,429.1px 206.8px,441.2px 215.5px,453.1px 224.0px,464.7px 232.3px,476.2px 240.5px,487.4px 248.5px,498.3px 256.3px,508.8px 263.9px,519.1px 271.2px,528.9px 278.3px,538.1px 284.9px,546.8px 291.1px,555.0px 297.0px,562.9px 302.6px,570.3px 308.0px,577.2px 312.9px,583.6px 317.4px,589.5px 321.6px,594.9px 325.5px,599.9px 329.1px,604.4px 332.3px,608.6px 335.3px,612.4px 338.0px,615.8px 340.5px,619.0px 342.8px,621.9px 344.8px,624.5px 346.7px,627.0px 348.5px,629.3px 350.1px,631.4px 351.6px,633.4px 353.1px,635.2px 354.4px,636.9px 355.6px,638.4px 356.7px,639.8px 357.7px,641.0px 358.5px,642.1px 359.3px,643.1px 360.0px,643.9px 360.6px,644.7px 361.2px,645.4px 361.7px,646.1px 362.1px,646.6px 362.5px,647.0px 362.9px,647.4px 363.1px,647.8px 363.4px,648.1px 363.6px,648.4px 363.8px,648.7px 364.0px,648.9px 364.2px,649.2px 364.4px,649.4px 364.6px,649.7px 364.7px,649.9px 364.9px,650.1px 365.1px,650.3px 365.2px,650.4px 365.3px,650.5px 365.4px,650.6px 365.4px,650.7px 365.5px,650.7px 365.5px,650.8px 365.5px,650.8px 365.6px)">
<i style="top:0px;left:61px;width:10px;background:linear-gradient(90deg,#0f0 0px,#0f0 10px)"></i>
<i style="top:2px;left:51px;width:37px;background:linear-gradient(90deg,#0f0 0px,#0f0 37px)"></i>
<i style="top:4px;left:46px;width:51px;background:linear-gradient(90deg,#0f0 0px,#0f0 51px)"></i>
<i style="top:6px;left:42px;width:62px;background:linear-gradient(90deg,#0f0 0px,#0f0 62px)"></i>
<i style="top:8px;left:38px;width:73px;background:linear-gradient(90deg,#0f0 0px,#0f0 73px)"></i>
<i style="top:10px;left:35px;width:81px;background:linear-gradient(90deg,#0f0 0px,#0f0 81px)"></i>
<i style="top:12px;left:33px;width:89px;background:linear-gradient(90deg,#0f0 0px,#0f0 89px)"></i>
<i style="top:14px;left:31px;width:96px;background:linear-gradient(90deg,#0f0 0px,#0f0 96px)"></i>
<i style="top:16px;left:29px;width:103px;background:linear-gradient(90deg,#0f0 0px,#0f0 103px)"></i>
<i style="top:18px;left:26px;width:111px;background:linear-gradient(90deg,#00ff01 0px,#0f0 111px)"></i>
<i style="top:20px;left:24px;width:117px;background:linear-gradient(90deg,#00ff02 0px,#0f0 116px,#0f0 117px)"></i>
<i style="top:22px;left:23px;width:123px;background:linear-gradient(90deg,#00ff03 0px,#0f0 45px,#0f0 123px)"></i>
<i style="top:24px;left:22px;width:129px;background:linear-gradient(90deg,#00ff04 0px,#0f0 42px,#0f0 129px)"></i>
<i style="top:26px;left:21px;width:134px;background:linear-gradient(90deg,#00ff05 0px,#0f0 42px,#0f0 134px)"></i>
<i style="top:28px;left:19px;width:140px;background:linear-gradient(90deg,#00ff06 0px,#0f0 46px,#0f0 140px)"></i>
<i style="top:30px;left:18px;width:146px;background:linear-gradient(90deg,#00ff07 0px,#0f0 49px,#0f0 146px)"></i>
<i style="top:32px;left:17px;width:151px;background:linear-gradient(90deg,#00ff08 0px,#0f0 53px,#0f0 151px)"></i>
<i style="top:34px;left:16px;width:156px;background:linear-gradient(90deg,#00ff09 0px,#0f0 57px,#0f0 156px)"></i>
<i style="top:36px;left:15px;width:161px;background:linear-gradient(90deg,#00ff0a 0px,#0f0 61px,#0f0 161px)"></i>
<i style="top:38px;left:14px;width:165px;background:linear-gradient(90deg,#00ff0b 0px,#0f0 65px,#0f0 165px)"></i>
<i style="top:40px;left:13px;width:170px;background:linear-gradient(90deg,#00ff0b 0px,#0f0 69px,#0f0 170px)"></i>
<i style="top:42px;left:12px;width:175px;background:linear-gradient(90deg,#00ff0c 0px,#0f0 74px,#0f0 175px)"></i>
<i style="top:44px;left:12px;width:179px;background:linear-gradient(90deg,#00ff0d 0px,#0f0 77px,#0f0 179px)"></i>
<i style="top:46px;left:11px;width:183px;background:linear-gradient(90deg,#00ff0e 0px,#0f0 81px,#0f0 183px)"></i>
<i style="top:48px;left:10px;width:188px;background:linear-gradient(90deg,#00ff0f 0px,#0f0 86px,#0f0 188px)"></i>
<i style="top:50px;left:9px;width:193px;background:linear-gradient(90deg,#00ff10 0px,#0f0 90px,#0f0 193px)"></i>
<i style="top:52px;left:8px;width:197px;background:linear-gradient(90deg,#0f1 0px,#0f0 94px,#0f0 197px)"></i>
<i style="top:54px;left:8px;width:201px;background:linear-gradient(90deg,#00ff12 0px,#0f0 98px,#0f0 201px)"></i>
<i style="top:56px;left:7px;width:205px;background:linear-gradient(90deg,#00ff13 0px,#0f0 102px,#0f0 205px)"></i>
<i style="top:58px;left:7px;width:208px;background:linear-gradient(90deg,#00ff14 0px,#0f0 105px,#0f0 208px)"></i>
<i style="top:60px;left:6px;width:213px;background:linear-gradient(90deg,#00ff15 0px,#0f0 110px,#0f0 213px)"></i>
<i style="top:62px;left:6px;width:216px;background:linear-gradient(90deg,#00ff15 0px,#0f0 113px,#0f0 216px)"></i>
<i style="top:64px;left:5px;width:220px;background:linear-gradient(90deg,#00ff16 0px,#0f0 118px,#0f0 220px)"></i>
<i style="top:66px;left:5px;width:224px;background:linear-gradient(90deg,#00ff17 0px,#0f0 121px,#0f0 224px)"></i>
<i style="top:68px;left:4px;width:228px;background:linear-gradient(90deg,#00ff18 0px,#0f0 126px,#0f0 228px)"></i>
<i style="top:70px;left:4px;width:231px;background:linear-gradient(90deg,#00ff19 0px,#0f0 129px,#0f0 231px)"></i>
<i style="top:72px;left:3px;width:235px;background:linear-gradient(90deg,#00ff1a 0px,#0f0 134px,#0f0 235px)"></i>
<i style="top:74px;left:3px;width:239px;background:linear-gradient(90deg,#00ff1b 0px,#0f0 137px,#0f0 239px)"></i>
<i style="top:76px;left:3px;width:242px;background:linear-gradient(90deg,#00ff1c 0px,#0f0 140px,#0f0 242px)"></i>
<i style="top:78px;left:2px;width:246px;background:linear-gradient(90deg,#00ff1d 0px,#0f0 145px,#0f0 246px)"></i>
<i style="top:80px;left:2px;width:249px;background:linear-gradient(90deg,#00ff1e 0px,#0f0 148px,#0f0 249px)"></i>
<i style="top:82px;left:2px;width:252px;background:linear-gradient(90deg,#00ff1f 0px,#0f0 152px,#0f0 252px)"></i>
<i style="top:84px;left:2px;width:255px;background:linear-gradient(90deg,#00ff1f 0px,#0f0 155px,#0f0 255px)"></i>
<i style="top:86px;left:1px;width:259px;background:linear-gradient(90deg,#00ff21 0px,#0f0 159px,#0f0 259px)"></i>
<i style="top:88px;left:1px;width:262px;background:linear-gradient(90deg,#00ff21 0px,#0f0 163px,#0f0 262px)"></i>
<i style="top:90px;left:1px;width:265px;background:linear-gradient(90deg,#0f2 0px,#0f0 166px,#0f0 265px)"></i>
<i style="top:92px;left:1px;width:268px;background:linear-gradient(90deg,#00ff23 0px,#0f0 170px,#0f0 268px)"></i>
<i style="top:94px;left:0px;width:272px;background:linear-gradient(90deg,#00ff24 0px,#0f0 174px,#0f0 272px)"></i>
<i style="top:96px;left:0px;width:275px;background:linear-gradient(90deg,#00ff25 0px,#0f0 178px,#0f0 275px)"></i>
<i style="top:98px;left:0px;width:278px;background:linear-gradient(90deg,#00ff26 0px,#0f0 181px,#0f0 278px)"></i>
<i style="top:100px;left:0px;width:281px;background:linear-gradient(90deg,#00ff27 0px,#0f0 185px,#0f0 281px)"></i>
<i style="top:102px;left:0px;width:284px;background:linear-gradient(90deg,#00ff28 0px,#0f0 188px,#01ff00 284px)"></i>
<i style="top:104px;left:0px;width:287px;background:linear-gradient(90deg,#00ff29 0px,#0f0 192px,#01ff00 283px,#06ff00 287px)"></i>
<i style="top:106px;left:0px;width:290px;background:linear-gradient(90deg,#00ff2a 0px,#0f0 195px,#01ff00 282px,#0aff00 290px)"></i>
<i style="top:108px;left:0px;width:293px;background:linear-gradient(90deg,#00ff2b 0px,#0f0 199px,#02ff00 282px,#0fff00 293px)"></i>
<i style="top:110px;left:0px;width:296px;background:linear-gradient(90deg,#00ff2c 0px,#00ff01 188px,#02ff00 281px,#13ff00 296px)"></i>
<i style="top:112px;left:0px;width:299px;background:linear-gradient(90deg,#00ff2d 0px,#00ff03 187px,#0f0 226px,#01ff00 280px,#18ff00 299px)"></i>
<i style="top:114px;left:0px;width:302px;background:linear-gradient(90deg,#00ff2e 0px,#00ff04 187px,#0f0 216px,#01ff00 279px,#1dff00 302px)"></i>
<i style="top:116px;left:0px;width:305px;background:linear-gradient(90deg,#00ff2f 0px,#00ff05 186px,#0f0 216px,#02ff00 279px,#21ff00 305px)"></i>
<i style="top:118px;left:0px;width:308px;background:linear-gradient(90deg,#00ff30 0px,#00ff06 186px,#0f0 218px,#02ff00 278px,#26ff00 308px)"></i>
<i style="top:120px;left:0px;width:311px;background:linear-gradient(90deg,#00ff31 0px,#00ff07 185px,#0f0 220px,#02ff00 277px,#2bff00 311px)"></i>
<i style="top:122px;left:0px;width:314px;background:linear-gradient(90deg,#00ff32 0px,#00ff08 185px,#0f0 223px,#01ff00 276px,#30ff00 314px)"></i>
<i style="top:124px;left:0px;width:316px;background:linear-gradient(90deg,#0f3 0px,#00ff09 185px,#0f0 226px,#01ff00 275px,#34ff00 316px)"></i>
<i style="top:126px;left:0px;width:319px;background:linear-gradient(90deg,#00ff35 0px,#00ff0b 184px,#0f0 229px,#02ff00 275px,#3aff00 319px)"></i>
<i style="top:128px;left:0px;width:322px;background:linear-gradient(90deg,#00ff36 0px,#00ff0c 184px,#0f0 233px,#02ff00 274px,#3fff00 322px)"></i>
<i style="top:130px;left:0px;width:325px;background:linear-gradient(90deg,#00ff37 0px,#00ff0d 183px,#0f0 236px,#01ff00 273px,#45ff00 325px)"></i>
<i style="top:132px;left:0px;width:328px;background:linear-gradient(90deg,#00ff38 0px,#00ff0e 183px,#0f0 239px,#01ff00 272px,#4aff00 328px)"></i>
<i style="top:134px;left:0px;width:331px;background:linear-gradient(90deg,#00ff39 0px,#00ff10 182px,#0f0 243px,#02ff00 272px,#50ff00 331px)"></i>
<i style="top:136px;left:0px;width:334px;background:linear-gradient(90deg,#00ff3a 0px,#0f1 182px,#0f0 246px,#02ff00 271px,#56ff00 334px)"></i>
<i style="top:138px;left:0px;width:337px;background:linear-gradient(90deg,#00ff3b 0px,#00ff12 182px,#0f0 249px,#02ff00 270px,#59ff00 335px,#5cff00 337px)"></i>
<i style="top:140px;left:0px;width:339px;background:linear-gradient(90deg,#00ff3c 0px,#00ff13 181px,#0f0 253px,#01ff00 269px,#5aff00 334px,#61ff00 339px)"></i>
<i style="top:142px;left:0px;width:342px;background:linear-gradient(90deg,#00ff3e 0px,#00ff14 181px,#0f0 256px,#02ff00 269px,#5aff00 333px,#67ff00 342px)"></i>
<i style="top:144px;left:0px;width:345px;background:linear-gradient(90deg,#00ff3f 0px,#00ff16 180px,#0f0 260px,#02ff00 268px,#5aff00 332px,#6eff00 345px)"></i>
<i style="top:146px;left:0px;width:348px;background:linear-gradient(90deg,#00ff40 0px,#00ff17 180px,#0f0 263px,#05ff00 270px,#5dff00 333px,#75ff00 348px)"></i>
<i style="top:148px;left:0px;width:351px;background:linear-gradient(90deg,#00ff41 0px,#00ff19 179px,#01ff00 266px,#59ff00 329px,#7bff00 351px)"></i>
<i style="top:150px;left:0px;width:354px;background:linear-gradient(90deg,#00ff42 0px,#00ff1a 179px,#01ff00 265px,#59ff00 328px,#82ff00 354px)"></i>
<i style="top:152px;left:0px;width:356px;background:linear-gradient(90deg,#00ff43 0px,#00ff1b 179px,#01ff01 264px,#59ff00 327px,#8f0 356px)"></i>
<i style="top:154px;left:0px;width:359px;background:linear-gradient(90deg,#00ff45 0px,#00ff1d 178px,#02ff02 264px,#5aff00 326px,#8fff00 359px)"></i>
<i style="top:156px;left:0px;width:362px;background:linear-gradient(90deg,#00ff46 0px,#00ff1e 178px,#02ff04 263px,#20ff00 286px,#7aff00 345px,#97ff00 362px)"></i>
<i style="top:158px;left:0px;width:365px;background:linear-gradient(90deg,#00ff47 0px,#00ff1f 178px,#01ff05 262px,#2f0 286px,#7cff00 345px,#9fff00 365px)"></i>
<i style="top:160px;left:0px;width:368px;background:linear-gradient(90deg,#00ff49 0px,#00ff21 177px,#01ff07 261px,#27ff00 289px,#82ff00 347px,#a6ff00 368px)"></i>
<i style="top:162px;left:0px;width:371px;background:linear-gradient(90deg,#00ff4a 0px,#0f2 177px,#02ff08 261px,#2cff00 291px,#85ff00 348px,#afff00 371px)"></i>
<i style="top:164px;left:0px;width:373px;background:linear-gradient(90deg,#00ff4b 0px,#00ff24 176px,#02ff0a 260px,#3f0 295px,#8dff00 351px,#b5ff00 373px)"></i>
<i style="top:166px;left:0px;width:376px;background:linear-gradient(90deg,#00ff4c 0px,#00ff25 176px,#01ff0c 259px,#39ff00 298px,#93ff00 353px,#beff00 376px)"></i>
<i style="top:168px;left:1px;width:378px;background:linear-gradient(90deg,#00ff4e 0px,#00ff26 175px,#01ff0d 257px,#3fff00 300px,#9f0 354px,#c6ff00 378px)"></i>
<i style="top:170px;left:1px;width:381px;background:linear-gradient(90deg,#00ff4f 0px,#00ff28 175px,#01ff0f 256px,#45ff00 303px,#a1ff00 357px,#cfff00 381px)"></i>
<i style="top:172px;left:1px;width:384px;background:linear-gradient(90deg,#00ff50 0px,#00ff29 175px,#02ff10 256px,#4dff00 307px,#a9ff00 360px,#d9ff00 384px)"></i>
<i style="top:174px;left:1px;width:386px;background:linear-gradient(90deg,#00ff52 0px,#00ff2b 174px,#02ff12 255px,#54ff00 310px,#b0ff00 362px,#e0ff00 386px)"></i>
<i style="top:176px;left:1px;width:389px;background:linear-gradient(90deg,#00ff53 0px,#00ff2c 174px,#01ff14 254px,#59ff00 312px,#b5ff00 363px,#eaff00 389px)"></i>
<i style="top:178px;left:2px;width:391px;background:linear-gradient(90deg,#00ff54 0px,#00ff2e 173px,#01ff16 252px,#59ff00 310px,#b6ff00 361px,#f4ff00 391px)"></i>
<i style="top:180px;left:2px;width:394px;background:linear-gradient(90deg,#00ff56 0px,#00ff2f 173px,#02ff17 252px,#59ff02 309px,#b4ff00 359px,#feff00 394px)"></i>
<i style="top:182px;left:2px;width:397px;background:linear-gradient(90deg,#00ff57 0px,#00ff31 173px,#02ff19 251px,#5aff04 308px,#7cff00 328px,#dbff00 376px,#fffe00 393px,#fff500 397px)"></i>
<i style="top:184px;left:2px;width:400px;background:linear-gradient(90deg,#00ff59 0px,#00ff32 173px,#01ff1b 250px,#5aff06 307px,#7fff00 328px,#dcff00 375px,#ff0 391px,#ffeb00 400px)"></i>
<i style="top:186px;left:2px;width:402px;background:linear-gradient(90deg,#00ff5a 0px,#00ff34 172px,#01ff1d 249px,#58ff08 305px,#85ff00 330px,#e4ff00 377px,#fffd00 390px,#ffe400 402px)"></i>
<i style="top:188px;left:3px;width:404px;background:linear-gradient(90deg,#00ff5b 0px,#00ff35 172px,#01ff1f 247px,#59ff0a 303px,#8fff00 333px,#ef0 379px,#fffe00 387px,#ffdb00 404px)"></i>
<i style="top:190px;left:3px;width:407px;background:linear-gradient(90deg,#00ff5d 0px,#00ff37 171px,#02ff20 247px,#5bff0c 303px,#97ff00 336px,#f6ff00 381px,#fffc00 386px,#ffd300 407px)"></i>
<i style="top:192px;left:3px;width:410px;background:linear-gradient(90deg,#00ff5e 0px,#00ff39 171px,#02ff22 246px,#59ff0e 301px,#a0ff00 339px,#fffd00 384px,#ffce00 408px,#ffca00 410px)"></i>
<i style="top:194px;left:3px;width:413px;background:linear-gradient(90deg,#00ff60 0px,#00ff3a 171px,#01ff24 245px,#59ff10 300px,#a9ff00 342px,#fffe00 382px,#ffce00 406px,#ffc300 413px)"></i>
<i style="top:196px;left:3px;width:415px;background:linear-gradient(90deg,#00ff61 0px,#00ff3c 171px,#01ff26 244px,#5aff12 299px,#b4ff00 346px,#ff0 380px,#ffce00 404px,#ffbd00 415px)"></i>
<i style="top:198px;left:4px;width:417px;background:linear-gradient(90deg,#00ff63 0px,#00ff3e 170px,#01ff28 242px,#58ff15 296px,#b5ff00 344px,#ff0 377px,#ffcd00 402px,#ffb500 417px)"></i>
<i style="top:200px;left:4px;width:420px;background:linear-gradient(90deg,#00ff64 0px,#00ff40 170px,#02ff2a 242px,#5aff16 296px,#b6ff02 343px,#fffe00 376px,#ffcd00 400px,#ffae00 420px)"></i>
<i style="top:202px;left:4px;width:423px;background:linear-gradient(90deg,#0f6 0px,#00ff41 170px,#01ff2c 241px,#59ff19 294px,#b5ff04 341px,#daff00 358px,#fffe00 374px,#ffcf00 397px,#ffa800 423px)"></i>
<i style="top:204px;left:5px;width:424px;background:linear-gradient(90deg,#00ff67 0px,#00ff43 169px,#01ff2e 239px,#59ff1b 292px,#b6ff07 339px,#e0ff00 358px,#ff0 371px,#ffce00 395px,#ffa300 424px)"></i>
<i style="top:206px;left:5px;width:427px;background:linear-gradient(90deg,#00ff69 0px,#00ff45 169px,#01ff30 238px,#59ff1d 291px,#b4ff09 337px,#ebff00 361px,#fffe00 370px,#ffce00 393px,#ffa100 423px,#ff9d00 427px)"></i>
<i style="top:208px;left:5px;width:430px;background:linear-gradient(90deg,#00ff6b 0px,#00ff47 169px,#02ff32 238px,#59ff1f 290px,#b5ff0c 336px,#f6ff00 364px,#fffc00 369px,#fc0 392px,#ffa000 422px,#ff9700 430px)"></i>
<i style="top:210px;left:5px;width:433px;background:linear-gradient(90deg,#00ff6c 0px,#00ff48 169px,#02ff34 237px,#5aff22 289px,#b6ff0e 335px,#ff0 366px,#ffce00 389px,#ffa300 418px,#ff9100 433px)"></i>
<i style="top:212px;left:6px;width:435px;background:linear-gradient(90deg,#00ff6e 0px,#00ff4a 168px,#01ff37 235px,#5aff24 287px,#b5ff11 332px,#fffd01 364px,#ffcd00 387px,#ffa100 416px,#ff8b00 435px)"></i>
<i style="top:214px;left:6px;width:437px;background:linear-gradient(90deg,#00ff70 0px,#00ff4c 168px,#01ff39 234px,#58ff27 285px,#b4ff14 330px,#fffe04 362px,#ffdc00 377px,#ffaf00 404px,#ff8700 437px)"></i>
<i style="top:216px;left:6px;width:440px;background:linear-gradient(90deg,#00ff71 0px,#00ff4e 168px,#01ff3b 233px,#59ff29 284px,#b5ff16 329px,#ffff07 360px,#ffd700 378px,#fa0 405px,#ff8200 440px)"></i>
<i style="top:218px;left:7px;width:442px;background:linear-gradient(90deg,#00ff73 0px,#00ff50 167px,#02ff3d 232px,#5bff2b 283px,#b6ff19 327px,#fffd09 358px,#ffce00 380px,#ffa100 409px,#ff7d00 442px)"></i>
<i style="top:220px;left:7px;width:445px;background:linear-gradient(90deg,#00ff75 0px,#00ff52 167px,#01ff3f 231px,#59ff2e 281px,#b5ff1b 325px,#fffe0c 356px,#ffce00 378px,#ffa200 406px,#ff7a00 443px,#ff7800 445px)"></i>
<i style="top:222px;left:7px;width:448px;background:linear-gradient(90deg,#0f7 0px,#00ff54 167px,#01ff42 230px,#59ff30 280px,#b6ff1e 324px,#ffff10 354px,#ffce03 376px,#ffac00 397px,#ff8200 432px,#ff7400 448px)"></i>
<i style="top:224px;left:7px;width:450px;background:linear-gradient(90deg,#00ff78 0px,#00ff56 167px,#01ff44 229px,#5aff33 279px,#b5ff21 322px,#fffd12 353px,#ffcd05 375px,#ffaf00 393px,#ff8500 427px,#ff7000 450px)"></i>
<i style="top:226px;left:8px;width:452px;background:linear-gradient(90deg,#00ff7a 0px,#00ff58 167px,#02ff46 228px,#5aff35 277px,#b6ff24 320px,#fffe15 350px,#ffcf08 371px,#ffa900 394px,#ff8000 429px,#ff6c00 452px)"></i>
<i style="top:228px;left:8px;width:455px;background:linear-gradient(90deg,#00ff7c 0px,#00ff5a 167px,#02ff49 227px,#5aff38 276px,#b7ff26 319px,#ffff19 348px,#ffcf0b 369px,#ffa300 396px,#ff7b00 432px,#ff6700 455px)"></i>
<i style="top:230px;left:9px;width:457px;background:linear-gradient(90deg,#00ff7e 0px,#00ff5c 166px,#01ff4b 225px,#59ff3b 273px,#b3ff2a 315px,#feff1c 345px,#ffcc0d 368px,#ff9f00 396px,#f70 433px,#ff6300 457px)"></i>
<i style="top:232px;left:9px;width:460px;background:linear-gradient(90deg,#00ff80 0px,#00ff5e 166px,#01ff4e 224px,#59ff3e 272px,#b4ff2d 314px,#fffe1f 344px,#ffce10 365px,#ffa202 392px,#ff7900 428px,#ff5f00 460px)"></i>
<i style="top:234px;left:9px;width:462px;background:linear-gradient(90deg,#00ff82 0px,#00ff60 166px,#01ff51 223px,#59ff40 271px,#b5ff30 313px,#ff2 342px,#ffce13 363px,#ffa205 390px,#ff8900 410px,#ff6300 453px,#ff5c00 462px)"></i>
<i style="top:236px;left:10px;width:464px;background:linear-gradient(90deg,#00ff83 0px,#00ff62 166px,#02ff53 222px,#59ff43 269px,#b4ff33 310px,#ffff25 339px,#ffcc15 361px,#ffa006 388px,#ff8500 411px,#ff5f00 455px,#ff5900 464px)"></i>
<i style="top:238px;left:10px;width:467px;background:linear-gradient(90deg,#00ff85 0px,#00ff65 166px,#01ff56 221px,#5aff46 268px,#b5ff36 309px,#fffe28 338px,#ffcd18 359px,#ffa009 386px,#ff8000 413px,#ff5b00 458px,#f50 467px)"></i>
<i style="top:240px;left:10px;width:470px;background:linear-gradient(90deg,#00ff87 0px,#00ff67 166px,#01ff58 220px,#5aff49 267px,#b6ff39 308px,#fffe2c 336px,#ffcf1b 356px,#ffa30c 382px,#ff7b00 416px,#ff5600 463px,#ff5200 470px)"></i>
<i style="top:242px;left:11px;width:472px;background:linear-gradient(90deg,#00ff89 0px,#00ff69 166px,#01ff5b 218px,#58ff4c 264px,#b3ff3d 304px,#ffff30 333px,#ffcd1e 354px,#ffa10e 380px,#ff7900 415px,#ff5400 462px,#ff4e00 472px)"></i>
<i style="top:244px;left:11px;width:474px;background:linear-gradient(90deg,#00ff8b 0px,#00ff6c 166px,#00ff5e 217px,#58ff4f 263px,#b4ff40 303px,#fffd32 332px,#ffce21 352px,#ffa110 378px,#ff7902 412px,#ff5400 459px,#ff4b00 474px)"></i>
<i style="top:246px;left:11px;width:477px;background:linear-gradient(90deg,#00ff8e 0px,#00ff6e 167px,#02ff60 217px,#59ff52 262px,#b5ff43 302px,#fffe36 330px,#ffce24 350px,#ffa113 376px,#ff7904 410px,#ff6500 433px,#ff4800 477px)"></i>
<i style="top:248px;left:12px;width:479px;background:linear-gradient(90deg,#00ff90 0px,#00ff70 166px,#01ff63 215px,#59ff55 260px,#b3ff46 299px,#ffff3a 327px,#ffce27 347px,#ffa316 372px,#ff7b06 405px,#ff6400 431px,#ff4500 479px)"></i>
<i style="top:250px;left:12px;width:482px;background:linear-gradient(90deg,#00ff92 0px,#00ff73 167px,#01ff66 214px,#59ff58 259px,#b5ff4a 298px,#fffd3d 326px,#ffcd29 346px,#ffa118 371px,#ff7808 405px,#ff5f00 434px,#ff4200 482px)"></i>
<i style="top:252px;left:12px;width:485px;background:linear-gradient(90deg,#00ff94 0px,#00ff75 167px,#01ff69 213px,#58ff5c 257px,#b3ff4d 296px,#fffe41 324px,#ffcf2e 343px,#ffa31b 368px,#ff7a0a 401px,#ff5c00 436px,#ff3f00 485px)"></i>
<i style="top:254px;left:13px;width:486px;background:linear-gradient(90deg,#00ff96 0px,#00ff78 167px,#02ff6c 212px,#5aff5e 256px,#b4ff51 294px,#ffff45 321px,#ffcf31 340px,#ffa31e 365px,#ff7a0d 398px,#ff5800 438px,#ff3d00 486px)"></i>
<i style="top:256px;left:13px;width:489px;background:linear-gradient(90deg,#00ff98 0px,#00ff7a 167px,#02ff6f 211px,#5aff62 255px,#b6ff54 293px,#fffd48 320px,#ffce33 339px,#ffa120 364px,#ff780e 397px,#ff5400 442px,#ff3a00 489px)"></i>
<i style="top:258px;left:14px;width:491px;background:linear-gradient(90deg,#00ff9a 0px,#00ff7d 167px,#01ff72 209px,#58ff65 252px,#b4ff58 290px,#fffe4c 317px,#ffce37 336px,#ffa223 360px,#ff7a11 392px,#ff5501 436px,#ff3700 491px)"></i>
<i style="top:260px;left:14px;width:494px;background:linear-gradient(90deg,#00ff9d 0px,#00ff7f 168px,#01ff75 208px,#59ff69 251px,#b5ff5b 289px,#ffff51 315px,#ffce3a 334px,#ffa226 358px,#ff7a13 390px,#ff5503 433px,#ff4100 467px,#ff3400 494px)"></i>
<i style="top:262px;left:15px;width:495px;background:linear-gradient(90deg,#00ff9f 0px,#00ff82 168px,#00ff78 206px,#59ff6c 249px,#b4ff5f 286px,#feff55 312px,#ffca3c 333px,#ff9e27 358px,#ff7514 391px,#ff5102 436px,#ff3800 481px,#ff3200 495px)"></i>
<i style="top:264px;left:15px;width:498px;background:linear-gradient(90deg,#00ffa1 0px,#00ff84 169px,#02ff7c 206px,#59ff70 248px,#b5ff63 285px,#fffe58 311px,#ffcf42 329px,#ffa22c 353px,#ff7a18 384px,#ff5506 427px,#ff4300 457px,#ff3000 498px)"></i>
<i style="top:266px;left:15px;width:501px;background:linear-gradient(90deg,#00ffa4 0px,#00ff87 169px,#01ff7f 205px,#5aff73 247px,#b7ff67 284px,#ffff5d 309px,#ffcf45 327px,#ffa430 350px,#ff7b1b 381px,#ff5609 423px,#ff4000 459px,#ff2d00 501px)"></i>
<i style="top:268px;left:16px;width:503px;background:linear-gradient(90deg,#00ffa6 0px,#00ff8a 170px,#01ff82 203px,#58ff77 244px,#b2ff6b 280px,#feff61 306px,#ffcb47 326px,#ff9f30 350px,#ff761b 382px,#ff5209 425px,#ff3d00 462px,#ff2b00 503px)"></i>
<i style="top:270px;left:16px;width:506px;background:linear-gradient(90deg,#00ffa9 0px,#00ff8d 170px,#00ff86 202px,#58ff7b 243px,#b4ff6f 279px,#fffe65 305px,#ffce4c 323px,#ffa235 346px,#ff791f 377px,#ff540c 419px,#ff3a00 465px,#ff2900 506px)"></i>
<i style="top:272px;left:17px;width:507px;background:linear-gradient(90deg,#00ffab 0px,#00ff90 171px,#02ff89 201px,#5bff7e 242px,#b8ff73 278px,#ffff6a 302px,#ffce50 320px,#ffa238 343px,#ff7a22 373px,#ff550f 414px,#ff3700 466px,#ff2700 507px)"></i>
<i style="top:274px;left:17px;width:510px;background:linear-gradient(90deg,#00ffae 0px,#00ff93 172px,#02ff8d 200px,#59ff82 240px,#b3ff77 275px,#feff6f 300px,#ffcc52 319px,#ffa03a 342px,#ff7824 372px,#ff5410 413px,#ff3400 469px,#ff2400 510px)"></i>
<i style="top:276px;left:18px;width:512px;background:linear-gradient(90deg,#00ffb0 0px,#00ff96 173px,#01ff90 198px,#59ff86 238px,#b5ff7c 273px,#fffd72 298px,#ffcf58 315px,#ffa33f 337px,#ff7a28 367px,#ff5613 407px,#ff3500 464px,#f20 512px)"></i>
<i style="top:278px;left:18px;width:515px;background:linear-gradient(90deg,#00ffb3 0px,#0f9 174px,#01ff94 197px,#59ff8a 237px,#b6ff80 272px,#fffe77 296px,#ffcf5c 313px,#ffa342 335px,#ff7b2b 364px,#ff5616 404px,#ff3502 460px,#ff2000 514px,#ff2000 515px)"></i>
<i style="top:280px;left:18px;width:518px;background:linear-gradient(90deg,#00ffb6 0px,#00ff9c 175px,#00ff98 196px,#57ff8e 235px,#b1ff85 269px,#ffff7c 294px,#ffcd5f 312px,#ffa145 334px,#ff7a2d 363px,#ff5517 403px,#ff3404 459px,#ff2700 490px,#ff1e00 518px)"></i>
<i style="top:282px;left:19px;width:519px;background:linear-gradient(90deg,#00ffb8 0px,#00ff9f 176px,#02ff9b 195px,#5aff92 234px,#b6ff89 268px,#fffd80 292px,#ffce63 309px,#ffa148 331px,#ff7930 360px,#ff5419 400px,#ff3305 456px,#ff2600 488px,#ff1c00 519px)"></i>
<i style="top:284px;left:19px;width:522px;background:linear-gradient(90deg,#0fb 0px,#00ffa2 178px,#01ff9f 194px,#58ff97 232px,#b4ff8d 266px,#fffe86 290px,#ffce67 307px,#ffa14c 329px,#ff7932 358px,#ff541b 397px,#ff3407 452px,#ff2500 489px,#ff1a00 522px)"></i>
<i style="top:286px;left:20px;width:524px;background:linear-gradient(90deg,#00ffbe 0px,#00ffa6 179px,#01ffa3 192px,#58ff9b 230px,#b3ff92 263px,#ffff8b 287px,#ffce6c 304px,#ffa350 325px,#ff7b36 353px,#ff561f 391px,#ff350a 445px,#ff2300 490px,#ff1800 524px)"></i>
<i style="top:288px;left:20px;width:527px;background:linear-gradient(90deg,#00ffc1 0px,#00ffa9 181px,#00ffa7 191px,#59ff9f 229px,#b4ff97 262px,#fffd8f 286px,#ffcf70 302px,#ffa354 323px,#ff7a39 351px,#ff5621 389px,#ff350b 443px,#ff2000 493px,#ff1600 527px)"></i>
<i style="top:290px;left:21px;width:529px;background:linear-gradient(90deg,#00ffc4 0px,#00ffad 182px,#02ffab 190px,#59ffa4 227px,#b5ff9c 260px,#fffe95 283px,#ffcf75 299px,#ffa357 320px,#ff7a3c 348px,#ff5523 386px,#ff340d 439px,#ff1e00 496px,#ff1400 529px)"></i>
<i style="top:292px;left:21px;width:531px;background:linear-gradient(90deg,#00ffc7 0px,#00ffb0 185px,#02ffaf 189px,#59ffa8 226px,#b4ffa1 258px,#ffff9b 281px,#ffcf7a 297px,#ffa35b 318px,#ff7b40 345px,#ff5626 382px,#ff3510 434px,#ff1c00 498px,#ff1300 531px)"></i>
<i style="top:294px;left:22px;width:533px;background:linear-gradient(90deg,#00ffca 0px,#01ffb4 187px,#5affad 224px,#b5ffa6 256px,#feffa0 278px,#ffcb7b 296px,#ff9f5c 317px,#ff7740 345px,#ff5226 383px,#ff320f 437px,#ff1a00 501px,#f10 533px)"></i>
<i style="top:296px;left:22px;width:536px;background:linear-gradient(90deg,#00ffcd 0px,#01ffb8 186px,#57ffb2 222px,#b3ffab 254px,#fffea5 277px,#ffce82 293px,#ffa363 313px,#ff7a45 340px,#ff552b 377px,#ff3413 429px,#ff1800 502px,#ff0f00 536px)"></i>
<i style="top:298px;left:23px;width:538px;background:linear-gradient(90deg,#00ffd0 0px,#00ffbc 184px,#58ffb6 220px,#b2ffb0 251px,#ffffab 274px,#ffce87 290px,#ffa267 310px,#ff7a49 337px,#ff552e 373px,#ff3515 424px,#ff1800 499px,#ff0d00 538px)"></i>
<i style="top:300px;left:23px;width:540px;background:linear-gradient(90deg,#00ffd3 0px,#02ffc1 184px,#58ffbb 219px,#b3ffb6 250px,#feffb1 272px,#ffc988 290px,#ff9d67 311px,#ff7649 338px,#ff522e 375px,#ff3115 428px,#ff1500 506px,#ff0c00 540px)"></i>
<i style="top:302px;left:24px;width:542px;background:linear-gradient(90deg,#00ffd6 0px,#01ffc5 182px,#59ffc0 217px,#b5ffbb 248px,#fffeb6 270px,#ffcf91 285px,#ffa26f 305px,#ff7a50 331px,#f53 367px,#ff341a 417px,#ff1703 491px,#ff0d00 531px,#ff0a00 542px)"></i>
<i style="top:304px;left:24px;width:545px;background:linear-gradient(90deg,#00ffda 0px,#01ffca 181px,#59ffc5 216px,#b3ffc1 246px,#ffffbc 268px,#ffcf97 283px,#ffa474 302px,#ff7b54 328px,#ff5637 363px,#ff351d 412px,#ff1806 484px,#ff0e00 522px,#ff0900 545px)"></i>
<i style="top:306px;left:25px;width:547px;background:linear-gradient(90deg,#0fd 0px,#00ffcf 179px,#57ffcb 213px,#b1ffc6 243px,#feffc3 265px,#ffca98 282px,#ff9e74 302px,#ff7754 328px,#ff5236 364px,#ff321c 415px,#ff1505 490px,#ff0b00 527px,#ff0700 547px)"></i>
<i style="top:308px;left:25px;width:550px;background:linear-gradient(90deg,#00ffe0 0px,#00ffd4 178px,#54ffd0 211px,#afffcc 241px,#fffdc8 264px,#ffcea0 279px,#ffa27c 298px,#ff7a5a 323px,#ff563c 357px,#ff3521 405px,#ff1809 476px,#ff0b00 526px,#ff0600 550px)"></i>
<i style="top:310px;left:26px;width:551px;background:linear-gradient(90deg,#00ffe4 0px,#02ffd9 177px,#5affd5 211px,#b4ffd2 240px,#ffffcf 261px,#ffcea5 276px,#ffa280 295px,#ff7a5e 320px,#ff553f 354px,#ff3423 402px,#ff170a 473px,#ff0900 528px,#ff0400 551px)"></i>
<i style="top:312px;left:26px;width:554px;background:linear-gradient(90deg,#00ffe7 0px,#01ffde 176px,#58ffdb 209px,#b2ffd8 238px,#feffd6 259px,#ffcca9 275px,#ffa083 294px,#ff7860 319px,#ff5441 353px,#ff3324 401px,#ff160b 472px,#ff0700 531px,#ff0300 554px)"></i>
<i style="top:314px;left:27px;width:556px;background:linear-gradient(90deg,#00ffeb 0px,#01ffe3 174px,#58ffe1 207px,#b4ffde 236px,#fffddb 257px,#ffcfb1 271px,#ffa48b 289px,#ff7c67 313px,#ff5746 346px,#ff3629 392px,#ff190f 460px,#ff0600 532px,#ff0100 556px)"></i>
<i style="top:316px;left:27px;width:559px;background:linear-gradient(90deg,#00ffef 0px,#00ffe9 173px,#59ffe7 206px,#b5ffe5 235px,#fffee3 255px,#ffcfb8 269px,#ffa490 287px,#ff7b6b 311px,#ff5649 344px,#ff352b 390px,#ff1811 458px,#ff0400 535px,#f00 559px)"></i>
<i style="top:318px;left:28px;width:561px;background:linear-gradient(90deg,#00fff3 0px,#02ffee 172px,#59ffed 204px,#b3ffeb 232px,#feffea 252px,#ffcdbb 267px,#ffa293 285px,#ff796d 309px,#ff554b 342px,#ff342d 388px,#ff1712 456px,#ff0300 537px,#f00 561px)"></i>
<i style="top:320px;left:28px;width:564px;background:linear-gradient(90deg,#00fff6 0px,#01fff4 171px,#59fff3 203px,#b5fff2 231px,#fffdef 251px,#ffcdc2 265px,#ffa198 283px,#ff7971 307px,#ff544e 340px,#ff332f 386px,#ff1613 454px,#ff0100 539px,#f00 564px)"></i>
<i style="top:322px;left:29px;width:565px;background:linear-gradient(90deg,#00fffa 0px,#01fff9 169px,#57fff9 200px,#b3fff9 228px,#fffef8 248px,#ffcec8 262px,#ffa19d 280px,#ff7875 304px,#ff5451 336px,#ff3432 381px,#ff1715 448px,#f00 540px,#f00 565px)"></i>
<i style="top:324px;left:29px;width:568px;background:linear-gradient(90deg,#00fffe 0px,#0ff 168px,#57ffff 199px,#b1feff 226px,#fefeff 246px,#ffc8c9 262px,#ff9d9e 280px,#ff7576 304px,#ff5152 337px,#ff3031 384px,#ff1415 453px,#f00 541px,#f00 568px)"></i>
<i style="top:326px;left:30px;width:570px;background:linear-gradient(90deg,#00fcff 0px,#00f9ff 166px,#52f8ff 196px,#adf8ff 224px,#fdf7ff 245px,#ffc0c7 262px,#ff959b 281px,#ff6e73 306px,#ff4b4f 340px,#ff2c2f 388px,#ff1013 460px,#ff0001 538px,#f00 570px)"></i>
<i style="top:328px;left:31px;width:572px;background:linear-gradient(90deg,#00f8ff 0px,#02f3ff 165px,#5af2ff 197px,#b5f1ff 225px,#ffeefd 245px,#ffc1ce 259px,#ff97a2 277px,#ff7079 301px,#ff4d55 334px,#ff2e34 380px,#ff1217 448px,#ff0003 530px,#f00 572px)"></i>
<i style="top:330px;left:31px;width:574px;background:linear-gradient(90deg,#00f4ff 0px,#01eeff 164px,#58ecff 196px,#b2eaff 224px,#ffe7fe 245px,#ffbbcf 259px,#ff93a3 277px,#ff6d7b 301px,#ff4b56 334px,#ff2c35 380px,#ff1118 448px,#ff0004 526px,#f00 569px,#f00 574px)"></i>
<i style="top:332px;left:32px;width:576px;background:linear-gradient(90deg,#00f0ff 0px,#00e8ff 162px,#59e6ff 195px,#b6e4ff 224px,#ffe1fe 244px,#ffb6cf 258px,#ff8fa4 276px,#ff6a7c 300px,#ff4857 333px,#ff2a36 379px,#ff1019 447px,#ff0006 521px,#f00 566px,#f00 576px)"></i>
<i style="top:334px;left:32px;width:579px;background:linear-gradient(90deg,#00ecff 0px,#00e3ff 161px,#57e0ff 194px,#b2ddff 223px,#ffdbff 244px,#ffb1d0 258px,#ff8ba5 276px,#ff677d 300px,#ff4658 333px,#ff2937 379px,#ff0f19 447px,#ff0007 516px,#f00 568px,#f00 579px)"></i>
<i style="top:336px;left:33px;width:581px;background:linear-gradient(90deg,#00e8ff 0px,#02deff 160px,#58daff 193px,#b3d7ff 222px,#ffd4ff 243px,#ffaace 258px,#ff83a2 277px,#ff607a 302px,#ff4055 336px,#ff2434 384px,#ff0b17 455px,#ff0009 511px,#f00 569px,#f00 581px)"></i>
<i style="top:338px;left:33px;width:584px;background:linear-gradient(90deg,#00e4ff 0px,#01d9ff 159px,#5ad5ff 193px,#b6d1ff 223px,#feceff 243px,#ffa3cc 259px,#ff7ea1 278px,#ff5c79 303px,#ff3d55 337px,#ff2235 385px,#ff0918 456px,#ff000a 507px,#f00 572px,#f00 584px)"></i>
<i style="top:340px;left:34px;width:585px;background:linear-gradient(90deg,#00e0ff 0px,#01d4ff 157px,#58cfff 191px,#b3cbff 221px,#fec7ff 242px,#ff9cca 259px,#ff779e 279px,#ff5676 305px,#ff3852 341px,#ff1d31 392px,#ff0515 467px,#ff000b 504px,#f00 574px,#f00 585px)"></i>
<i style="top:342px;left:35px;width:587px;background:linear-gradient(90deg,#0df 0px,#00cfff 155px,#59caff 190px,#b4c5ff 220px,#ffc0fd 242px,#ff99ce 257px,#ff76a3 276px,#ff557a 302px,#ff3855 337px,#ff1d35 386px,#ff0618 459px,#ff000d 497px,#f00 576px,#f00 587px)"></i>
<i style="top:344px;left:35px;width:590px;background:linear-gradient(90deg,#00d9ff 0px,#02caff 155px,#5ac5ff 190px,#b7bfff 221px,#ffbafe 242px,#ff95cf 257px,#ff71a2 277px,#ff527a 303px,#ff3555 338px,#ff1b35 388px,#ff0418 462px,#ff000e 497px,#f00 579px,#f00 590px)"></i>
<i style="top:346px;left:36px;width:592px;background:linear-gradient(90deg,#00d5ff 0px,#01c5ff 153px,#59c0ff 188px,#b4baff 219px,#ffb4fe 241px,#ff90cf 256px,#ff6ea3 276px,#ff4f7b 302px,#ff3256 338px,#ff1935 388px,#ff0218 462px,#ff0009 524px,#f00 584px,#f00 592px)"></i>
<i style="top:348px;left:36px;width:595px;background:linear-gradient(90deg,#00d2ff 0px,#01c1ff 152px,#5abbff 188px,#b5b4ff 219px,#ffafff 241px,#ff8cd0 256px,#ff6aa4 276px,#ff4c7c 302px,#ff3057 338px,#ff1736 388px,#ff0119 462px,#f00 575px,#f00 595px)"></i>
<i style="top:350px;left:37px;width:596px;background:linear-gradient(90deg,#00ceff 0px,#00bcff 150px,#58b6ff 186px,#b5afff 218px,#faf 240px,#ff86ce 256px,#ff66a3 276px,#ff477a 303px,#ff2d56 339px,#ff1535 390px,#ff0018 465px,#f00 578px,#f00 596px)"></i>
<i style="top:352px;left:38px;width:598px;background:linear-gradient(90deg,#00cbff 0px,#00b8ff 148px,#57b1ff 184px,#b2aaff 216px,#ffa4ff 239px,#ff80cc 256px,#ff60a0 277px,#ff4277 305px,#ff2853 343px,#ff1132 396px,#ff0019 463px,#f00 579px,#f00 598px)"></i>
<i style="top:354px;left:38px;width:601px;background:linear-gradient(90deg,#00c7ff 0px,#02b3ff 148px,#5aacff 185px,#b5a5ff 217px,#fe9fff 239px,#ff7acb 257px,#ff5b9f 278px,#ff3f77 306px,#ff2553 344px,#ff0e32 398px,#ff001b 458px,#ff0002 571px,#f00 601px)"></i>
<i style="top:356px;left:39px;width:603px;background:linear-gradient(90deg,#00c4ff 0px,#01afff 146px,#59a7ff 183px,#b69fff 216px,#ff98fd 239px,#ff77ce 255px,#ff59a2 276px,#ff3d79 304px,#ff2455 342px,#ff0d34 396px,#ff001d 453px,#ff0003 564px,#f00 603px)"></i>
<i style="top:358px;left:40px;width:605px;background:linear-gradient(90deg,#00c0ff 0px,#00abff 144px,#5aa3ff 182px,#b69aff 215px,#ff93fd 238px,#ff73cf 254px,#ff56a3 275px,#ff3b7a 303px,#f25 341px,#ff0c34 395px,#ff0020 447px,#ff0005 555px,#f00 605px)"></i>
<i style="top:360px;left:40px;width:607px;background:linear-gradient(90deg,#00bdff 0px,#00a7ff 143px,#589fff 181px,#b396ff 214px,#ff8efe 238px,#ff70cf 254px,#ff53a4 275px,#ff387b 303px,#ff2056 341px,#ff0b35 395px,#f02 442px,#ff0007 547px,#f00 607px)"></i>
<i style="top:362px;left:41px;width:609px;background:linear-gradient(90deg,#00b9ff 0px,#02a3ff 142px,#599aff 180px,#b791ff 214px,#ff89fe 237px,#ff6ace 254px,#ff4da1 276px,#ff3478 305px,#ff1c54 344px,#ff0834 399px,#ff0024 437px,#ff0009 539px,#f00 608px,#f00 609px)"></i>
<i style="top:364px;left:41px;width:611px;background:linear-gradient(90deg,#00b6ff 0px,#019fff 141px,#5a96ff 180px,#b78cff 214px,#ff84ff 237px,#ff66ce 254px,#ff4aa2 276px,#ff3179 305px,#ff1b55 344px,#ff0634 399px,#ff0026 433px,#ff000b 533px,#f00 611px)"></i>
<i style="top:366px;left:42px;width:609px;background:linear-gradient(90deg,#00b3ff 0px,#019bff 139px,#5992ff 178px,#b488ff 212px,#ff80ff 236px,#ff63cf 253px,#ff48a3 275px,#ff2f7a 304px,#ff1956 343px,#ff0535 398px,#ff0028 429px,#ff000d 527px,#f00 609px)"></i>
<i style="top:368px;left:43px;width:602px;background:linear-gradient(90deg,#00afff 0px,#0097ff 137px,#578eff 176px,#b483ff 211px,#fe7bff 235px,#ff5dcd 253px,#ff44a2 275px,#ff2c7a 304px,#ff1655 344px,#ff0334 400px,#ff0024 441px,#ff0009 546px,#f00 602px)"></i>
<i style="top:370px;left:43px;width:596px;background:linear-gradient(90deg,#00acff 0px,#0293ff 137px,#5b89ff 177px,#b87eff 212px,#fe76ff 235px,#ff57c9 255px,#ff3e9e 278px,#ff2776 308px,#ff1252 349px,#ff0032 408px,#ff0015 495px,#ff0001 596px)"></i>
<i style="top:372px;left:44px;width:589px;background:linear-gradient(90deg,#00a9ff 0px,#0190ff 135px,#5985ff 175px,#b57aff 210px,#ff71fd 235px,#ff56cf 252px,#ff3ea3 274px,#ff277a 304px,#ff1256 344px,#ff0035 401px,#ff0018 485px,#ff0003 589px)"></i>
<i style="top:374px;left:45px;width:582px;background:linear-gradient(90deg,#00a6ff 0px,#018cff 133px,#5882ff 173px,#b576ff 209px,#ff6cfe 234px,#ff52cd 252px,#ff39a1 275px,#ff2379 305px,#ff0f55 346px,#ff0036 400px,#ff0019 484px,#ff0004 582px)"></i>
<i style="top:376px;left:45px;width:576px;background:linear-gradient(90deg,#00a3ff 0px,#0089ff 132px,#597eff 173px,#b572ff 209px,#ff68fe 234px,#ff4ece 252px,#ff36a2 275px,#ff217a 305px,#ff0e55 346px,#ff0039 395px,#ff001b 476px,#ff0006 576px)"></i>
<i style="top:378px;left:46px;width:569px;background:linear-gradient(90deg,#009fff 0px,#0285ff 131px,#5a7aff 172px,#b66eff 208px,#ff64fe 233px,#ff4bce 251px,#ff34a3 274px,#ff1e7a 305px,#ff0b55 347px,#ff003c 389px,#ff001e 468px,#ff0007 569px)"></i>
<i style="top:380px;left:47px;width:562px;background:linear-gradient(90deg,#009cff 0px,#0182ff 129px,#5876ff 170px,#b36aff 206px,#ff60ff 232px,#ff47cf 250px,#ff31a3 273px,#ff1c7a 304px,#ff0a56 346px,#ff003f 384px,#ff0020 461px,#ff0009 562px)"></i>
<i style="top:382px;left:47px;width:556px;background:linear-gradient(90deg,#09f 0px,#017eff 128px,#5972ff 170px,#b666ff 207px,#ff5cff 232px,#ff43ce 251px,#ff2da1 275px,#ff1979 306px,#ff0754 349px,#ff0042 380px,#ff0023 455px,#ff000b 556px)"></i>
<i style="top:384px;left:48px;width:549px;background:linear-gradient(90deg,#0096ff 0px,#017bff 126px,#586fff 168px,#b462ff 205px,#fe57ff 231px,#ff3fcc 251px,#ff2aa0 275px,#ff1678 307px,#ff0453 351px,#ff0043 377px,#ff0025 451px,#ff000c 549px)"></i>
<i style="top:386px;left:49px;width:542px;background:linear-gradient(90deg,#0093ff 0px,#0278ff 125px,#5b6bff 168px,#b75eff 205px,#ff52fd 231px,#ff3ccd 250px,#ff27a1 274px,#ff1479 306px,#ff0354 350px,#ff0040 383px,#f02 460px,#ff000e 542px)"></i>
<i style="top:388px;left:50px;width:535px;background:linear-gradient(90deg,#0090ff 0px,#0275ff 123px,#5a68ff 166px,#b75aff 204px,#ff4ffd 230px,#ff38cd 249px,#ff25a2 273px,#ff1279 305px,#ff0155 349px,#ff0034 411px,#ff0017 502px,#ff0010 535px)"></i>
<i style="top:390px;left:50px;width:529px;background:linear-gradient(90deg,#008dff 0px,#0172ff 122px,#5964ff 165px,#b457ff 203px,#ff4bfe 230px,#ff35ce 249px,#ff22a2 273px,#ff107a 305px,#f05 349px,#ff0035 411px,#ff0018 502px,#ff0012 529px)"></i>
<i style="top:392px;left:51px;width:522px;background:linear-gradient(90deg,#008aff 0px,#016fff 120px,#5961ff 164px,#b553ff 202px,#ff47fe 229px,#ff32cf 248px,#ff1fa2 273px,#ff0d79 306px,#ff0056 348px,#ff0035 410px,#ff0018 501px,#ff0013 522px)"></i>
<i style="top:394px;left:52px;width:515px;background:linear-gradient(90deg,#0087ff 0px,#006cff 118px,#585eff 162px,#b54fff 201px,#ff43ff 228px,#ff2fcf 247px,#ff1da2 272px,#ff0b7a 305px,#ff005a 342px,#ff0039 402px,#ff001b 490px,#ff0015 515px)"></i>
<i style="top:396px;left:52px;width:509px;background:linear-gradient(90deg,#0085ff 0px,#0268ff 118px,#595aff 162px,#b54cff 201px,#ff40ff 228px,#ff2cd0 247px,#ff1aa3 272px,#ff097b 305px,#ff005f 337px,#ff003d 395px,#ff001f 479px,#ff0017 509px)"></i>
<i style="top:398px;left:53px;width:502px;background:linear-gradient(90deg,#0082ff 0px,#0166ff 116px,#5a57ff 161px,#b548ff 200px,#ff3cff 227px,#ff28cc 248px,#ff16a0 274px,#ff0677 308px,#ff0062 333px,#ff0040 389px,#ff0021 471px,#ff0019 502px)"></i>
<i style="top:400px;left:54px;width:495px;background:linear-gradient(90deg,#007fff 0px,#0163ff 114px,#5954ff 159px,#b645ff 199px,#ff38fd 227px,#ff25cd 247px,#ff14a0 273px,#ff0478 307px,#ff0064 330px,#ff0041 386px,#ff0023 467px,#ff001b 495px)"></i>
<i style="top:402px;left:55px;width:488px;background:linear-gradient(90deg,#007cff 0px,#0060ff 112px,#5a51ff 158px,#b641ff 198px,#ff34fd 226px,#ff22cd 246px,#ff11a1 272px,#ff0279 306px,#ff0054 353px,#f03 419px,#ff001d 488px)"></i>
<i style="top:404px;left:56px;width:481px;background:linear-gradient(90deg,#0079ff 0px,#025dff 111px,#5a4eff 157px,#b63eff 197px,#ff31fe 225px,#ff1fce 245px,#ff0fa2 271px,#ff017a 305px,#f05 352px,#ff0034 418px,#ff0020 481px)"></i>
<i style="top:406px;left:56px;width:475px;background:linear-gradient(90deg,#0076ff 0px,#015aff 110px,#594bff 156px,#b63bff 197px,#ff2efe 225px,#ff1dcf 245px,#ff0da2 271px,#ff007a 305px,#f05 352px,#ff0035 418px,#f02 475px)"></i>
<i style="top:408px;left:57px;width:468px;background:linear-gradient(90deg,#0074ff 0px,#0158ff 108px,#5a48ff 155px,#b637ff 196px,#ff2afe 224px,#ff1acf 244px,#ff0ba3 270px,#ff007e 301px,#ff0059 347px,#ff0038 411px,#ff0024 468px)"></i>
<i style="top:410px;left:58px;width:461px;background:linear-gradient(90deg,#0071ff 0px,#0155ff 106px,#5945ff 153px,#b435ff 194px,#ff27ff 223px,#ff17d0 243px,#ff09a4 269px,#ff0084 295px,#ff005e 339px,#ff003c 400px,#ff0026 461px)"></i>
<i style="top:412px;left:59px;width:454px;background:linear-gradient(90deg,#006eff 0px,#0252ff 105px,#5a42ff 152px,#b731ff 194px,#ff24ff 222px,#ff14ce 243px,#ff06a2 270px,#f08 291px,#ff0062 334px,#ff003f 394px,#ff0029 454px)"></i>
<i style="top:414px;left:60px;width:447px;background:linear-gradient(90deg,#006bff 0px,#0150ff 103px,#5a3fff 151px,#b72eff 193px,#fe21ff 221px,#ff11cd 243px,#ff03a1 270px,#ff0085 293px,#ff0060 337px,#ff003e 398px,#ff002b 447px)"></i>
<i style="top:416px;left:60px;width:441px;background:linear-gradient(90deg,#0069ff 0px,#014dff 102px,#593dff 150px,#b52bff 192px,#ff1dfd 222px,#ff0ece 243px,#ff01a2 270px,#ff0079 306px,#f05 355px,#ff0034 424px,#ff002e 441px)"></i>
<i style="top:418px;left:61px;width:434px;background:linear-gradient(90deg,#06f 0px,#014bff 100px,#583aff 148px,#b528ff 191px,#ff1afe 221px,#ff0cce 242px,#ff00a2 269px,#ff007a 305px,#f05 354px,#ff0035 423px,#ff0031 434px)"></i>
<i style="top:420px;left:62px;width:427px;background:linear-gradient(90deg,#0063ff 0px,#0248ff 99px,#5b37ff 148px,#b825ff 191px,#ff17fe 220px,#ff09cf 241px,#ff00a7 265px,#ff007e 300px,#ff0059 348px,#ff0038 415px,#f03 427px)"></i>
<i style="top:422px;left:63px;width:420px;background:linear-gradient(90deg,#0061ff 0px,#0246ff 97px,#5a34ff 146px,#b522ff 189px,#ff14fe 219px,#ff07cf 240px,#ff00ae 260px,#ff0084 294px,#ff005e 340px,#ff003c 404px,#ff0036 420px)"></i>
<i style="top:424px;left:64px;width:413px;background:linear-gradient(90deg,#005eff 0px,#0143ff 95px,#5a32ff 145px,#b61fff 188px,#f1f 218px,#ff04ce 240px,#ff00b3 256px,#ff0089 289px,#ff0062 334px,#ff0040 396px,#ff0039 413px)"></i>
<i style="top:426px;left:65px;width:406px;background:linear-gradient(90deg,#005bff 0px,#0141ff 93px,#592fff 143px,#b61dff 187px,#ff0eff 217px,#ff01ce 239px,#ff00a2 267px,#ff007a 304px,#f05 355px,#ff003c 406px)"></i>
<i style="top:428px;left:66px;width:399px;background:linear-gradient(90deg,#0059ff 0px,#003fff 91px,#582dff 141px,#b41aff 185px,#ff0bff 216px,#ff00cd 239px,#ff00a0 268px,#ff0078 306px,#ff0053 358px,#ff003f 399px)"></i>
<i style="top:430px;left:67px;width:392px;background:linear-gradient(90deg,#0056ff 0px,#023cff 90px,#5b2aff 141px,#b617ff 185px,#ff08fd 216px,#ff00d3 235px,#ff00a6 263px,#ff007d 300px,#ff0058 350px,#ff0042 392px)"></i>
<i style="top:432px;left:68px;width:385px;background:linear-gradient(90deg,#0054ff 0px,#013aff 88px,#5a28ff 139px,#b614ff 184px,#ff05fd 215px,#ff00dc 230px,#ff00ae 257px,#ff0084 292px,#ff005f 339px,#ff0046 385px)"></i>
<i style="top:434px;left:69px;width:378px;background:linear-gradient(90deg,#0051ff 0px,#0138ff 86px,#5925ff 137px,#b412ff 182px,#ff02fe 214px,#ff00cf 236px,#ff00a2 265px,#ff007a 303px,#f05 355px,#ff0049 378px)"></i>
<i style="top:436px;left:70px;width:371px;background:linear-gradient(90deg,#004eff 0px,#0136ff 84px,#5923ff 136px,#b50fff 181px,#ff00fe 213px,#ff00cd 236px,#ff00a2 265px,#ff0079 304px,#ff0054 357px,#ff004d 371px)"></i>
<i style="top:438px;left:71px;width:364px;background:linear-gradient(90deg,#004cff 0px,#0233ff 83px,#5a20ff 135px,#b70cff 181px,#fb00ff 210px,#ff00fc 213px,#f0c 236px,#ff00a0 266px,#f07 306px,#ff0053 360px,#ff0051 364px)"></i>
<i style="top:440px;left:72px;width:357px;background:linear-gradient(90deg,#0049ff 0px,#0131ff 81px,#591eff 133px,#b50aff 179px,#e0f 204px,#f0f 211px,#ff00ce 234px,#ff00a2 264px,#ff0079 303px,#f05 356px,#ff0054 357px)"></i>
<i style="top:442px;left:73px;width:350px;background:linear-gradient(90deg,#0047ff 0px,#012fff 79px,#5a1cff 132px,#b508ff 178px,#e500ff 199px,#f0f 210px,#ff00cf 233px,#ff00a2 263px,#ff007a 302px,#ff0058 350px)"></i>
<i style="top:444px;left:74px;width:343px;background:linear-gradient(90deg,#0045ff 0px,#012dff 77px,#591aff 130px,#b505ff 177px,#db00ff 194px,#ff00fd 210px,#ff00ce 233px,#ff00a2 263px,#ff0079 303px,#ff005d 343px)"></i>
<i style="top:446px;left:75px;width:336px;background:linear-gradient(90deg,#0042ff 0px,#022bff 76px,#5b17ff 130px,#b802ff 177px,#ff00fd 209px,#ff00ce 232px,#ff00a2 262px,#ff007a 302px,#ff0061 336px)"></i>
<i style="top:448px;left:76px;width:329px;background:linear-gradient(90deg,#0040ff 0px,#0229ff 74px,#5a15ff 128px,#b600ff 175px,#ff00fe 208px,#ff00cd 232px,#ff00a0 263px,#ff0078 304px,#ff0065 329px)"></i>
<i style="top:450px;left:77px;width:322px;background:linear-gradient(90deg,#003dff 0px,#0127ff 72px,#5913ff 126px,#b600ff 174px,#ff00fe 207px,#ff00ce 231px,#ff00a1 262px,#ff0078 303px,#ff006a 322px)"></i>
<i style="top:452px;left:78px;width:315px;background:linear-gradient(90deg,#003bff 0px,#0125ff 70px,#5a11ff 125px,#ac00ff 168px,#ff00fe 206px,#ff00ce 230px,#ff00a2 261px,#ff0079 302px,#ff006f 315px)"></i>
<i style="top:454px;left:79px;width:308px;background:linear-gradient(90deg,#0038ff 0px,#0223ff 69px,#5a0eff 124px,#a200ff 162px,#f0f 205px,#ff00cf 229px,#ff00a2 260px,#ff007a 301px,#ff0074 308px)"></i>
<i style="top:456px;left:80px;width:301px;background:linear-gradient(90deg,#0036ff 0px,#0221ff 67px,#590dff 122px,#9800ff 156px,#f800ff 201px,#ff00fd 205px,#ff00cd 229px,#ff00a2 260px,#ff007a 301px)"></i>
<i style="top:458px;left:81px;width:294px;background:linear-gradient(90deg,#0034ff 0px,#011fff 65px,#5a0aff 121px,#9100ff 151px,#ef00ff 196px,#ff00fd 204px,#ff00ce 228px,#ff00a1 260px,#ff007f 294px)"></i>
<i style="top:460px;left:82px;width:287px;background:linear-gradient(90deg,#0031ff 0px,#011eff 63px,#5909ff 119px,#80f 145px,#e600ff 191px,#ff00fd 203px,#ff00cd 228px,#ff00a0 260px,#ff0085 287px)"></i>
<i style="top:462px;left:83px;width:280px;background:linear-gradient(90deg,#002fff 0px,#021cff 62px,#5a06ff 118px,#8100ff 140px,#df00ff 187px,#ff00fd 202px,#ff00cd 227px,#ff00a1 259px,#ff008b 280px)"></i>
<i style="top:464px;left:84px;width:273px;background:linear-gradient(90deg,#002dff 0px,#021aff 60px,#5a04ff 117px,#7c00ff 136px,#db00ff 184px,#ff00fe 201px,#ff00ce 226px,#ff00a2 258px,#ff0091 273px)"></i>
<i style="top:466px;left:85px;width:266px;background:linear-gradient(90deg,#002bff 0px,#0118ff 58px,#5902ff 115px,#8f00ff 145px,#e0f 192px,#ff00fe 200px,#ff00ce 225px,#ff00a2 257px,#ff0098 266px)"></i>
<i style="top:468px;left:86px;width:259px;background:linear-gradient(90deg,#0028ff 0px,#0116ff 56px,#5a00ff 114px,#b600ff 164px,#ff00fe 199px,#ff00cf 224px,#ff00a3 256px,#ff009f 259px)"></i>
<i style="top:470px;left:87px;width:252px;background:linear-gradient(90deg,#0026ff 0px,#0115ff 54px,#5900ff 112px,#b600ff 163px,#f0f 198px,#ff00cf 223px,#ff00a7 252px)"></i>
<i style="top:472px;left:88px;width:245px;background:linear-gradient(90deg,#0024ff 0px,#0213ff 53px,#50f 108px,#b200ff 160px,#f0f 197px,#ff00cf 222px,#ff00af 245px)"></i>
<i style="top:474px;left:90px;width:237px;background:linear-gradient(90deg,#0021ff 0px,#0111ff 50px,#4f00ff 102px,#a0f 154px,#ff00fd 196px,#ff00cd 222px,#ff00b7 237px)"></i>
<i style="top:476px;left:91px;width:230px;background:linear-gradient(90deg,#001fff 0px,#010fff 48px,#4800ff 96px,#a300ff 149px,#ff00fd 195px,#ff00cd 221px,#ff00c0 230px)"></i>
<i style="top:478px;left:92px;width:224px;background:linear-gradient(90deg,#001dff 0px,#010eff 46px,#4100ff 90px,#9c00ff 144px,#ff00fe 194px,#ff00ce 220px,#ff00c8 224px)"></i>
<i style="top:480px;left:93px;width:217px;background:linear-gradient(90deg,#001bff 0px,#020cff 45px,#3a00ff 84px,#9500ff 139px,#f300ff 187px,#ff00fe 193px,#ff00d1 217px)"></i>
<i style="top:482px;left:95px;width:209px;background:linear-gradient(90deg,#0018ff 0px,#020aff 42px,#30f 77px,#8e00ff 133px,#ed00ff 182px,#ff00fe 191px,#ff00dc 209px)"></i>
<i style="top:484px;left:96px;width:202px;background:linear-gradient(90deg,#0016ff 0px,#0109ff 40px,#2d00ff 71px,#80f 128px,#e600ff 178px,#ff00fe 190px,#ff00e7 202px)"></i>
<i style="top:486px;left:97px;width:195px;background:linear-gradient(90deg,#0014ff 0px,#0107ff 38px,#2800ff 66px,#8100ff 123px,#e000ff 174px,#f0f 189px,#ff00f2 195px)"></i>
<i style="top:488px;left:98px;width:188px;background:linear-gradient(90deg,#0012ff 0px,#0206ff 37px,#2300ff 61px,#7c00ff 119px,#da00ff 170px,#f0f 188px)"></i>
<i style="top:490px;left:100px;width:180px;background:linear-gradient(90deg,#000fff 0px,#0204ff 34px,#2100ff 57px,#7b00ff 116px,#da00ff 168px,#f200ff 180px)"></i>
<i style="top:492px;left:101px;width:173px;background:linear-gradient(90deg,#000dff 0px,#0103ff 32px,#3000ff 66px,#8b00ff 124px,#e600ff 173px)"></i>
<i style="top:494px;left:103px;width:165px;background:linear-gradient(90deg,#000bff 0px,#0101ff 29px,#5900ff 91px,#b600ff 146px,#da00ff 165px)"></i>
<i style="top:496px;left:104px;width:158px;background:linear-gradient(90deg,#0009ff 0px,#0200ff 28px,#5b00ff 91px,#b800ff 146px,#ce00ff 158px)"></i>
<i style="top:498px;left:106px;width:150px;background:linear-gradient(90deg,#0006ff 0px,#0200ff 25px,#5a00ff 88px,#b600ff 143px,#c300ff 150px)"></i>
<i style="top:500px;left:107px;width:143px;background:linear-gradient(90deg,#0004ff 0px,#0100ff 23px,#5900ff 86px,#b600ff 142px,#b800ff 143px)"></i>
<i style="top:502px;left:109px;width:135px;background:linear-gradient(90deg,#0002ff 0px,#0100ff 20px,#5a00ff 84px,#ad00ff 135px)"></i>
<i style="top:504px;left:111px;width:127px;background:linear-gradient(90deg,#00f 0px,#0200ff 18px,#5b00ff 82px,#a300ff 127px)"></i>
<i style="top:506px;left:113px;width:119px;background:linear-gradient(90deg,#00f 0px,#0200ff 15px,#5a00ff 79px,#90f 119px)"></i>
<i style="top:508px;left:114px;width:112px;background:linear-gradient(90deg,#00f 0px,#0100ff 13px,#5a00ff 78px,#9000ff 112px)"></i>
<i style="top:510px;left:116px;width:104px;background:linear-gradient(90deg,#00f 0px,#0200ff 11px,#5b00ff 76px,#8600ff 104px)"></i>
<i style="top:512px;left:118px;width:96px;background:linear-gradient(90deg,#00f 0px,#0200ff 8px,#5b00ff 74px,#7d00ff 96px)"></i>
<i style="top:514px;left:121px;width:87px;background:linear-gradient(90deg,#00f 0px,#0700ff 8px,#5f00ff 73px,#7400ff 87px)"></i>
<i style="top:516px;left:123px;width:79px;background:linear-gradient(90deg,#00f 0px,#5800ff 66px,#6b00ff 79px)"></i>
<i style="top:518px;left:126px;width:70px;background:linear-gradient(90deg,#0500ff 0px,#5d00ff 66px,#6300ff 70px)"></i>
<i style="top:520px;left:129px;width:61px;background:linear-gradient(90deg,#0a00ff 0px,#5b00ff 61px)"></i>
<i style="top:522px;left:132px;width:52px;background:linear-gradient(90deg,#0e00ff 0px,#5300ff 52px)"></i>
<i style="top:524px;left:135px;width:43px;background:linear-gradient(90deg,#1300ff 0px,#4b00ff 43px)"></i>
<i style="top:526px;left:138px;width:34px;background:linear-gradient(90deg,#1700ff 0px,#4300ff 34px)"></i>
<i style="top:528px;left:141px;width:25px;background:linear-gradient(90deg,#1c00ff 0px,#3c00ff 25px)"></i>
<i style="top:530px;left:144px;width:16px;background:linear-gradient(90deg,#2000ff 0px,#3500ff 16px)"></i>
<i style="top:532px;left:148px;width:6px;background:linear-gradient(90deg,#2600ff 0px,#2e00ff 6px)"></i>
</div>
<div class="cg" style="left:1649.5px;top:145.2px;width:249.6px;height:198.8px">
<i style="top:0px;left:0px;width:250px;background:linear-gradient(90deg,#b0ff00 0px,#fffe00 203px,#ffeb00 250px)"></i>
<i style="top:2px;left:0px;width:250px;background:linear-gradient(90deg,#b1ff00 0px,#fffe00 201px,#ffeb00 250px)"></i>
<i style="top:4px;left:0px;width:250px;background:linear-gradient(90deg,#b1ff00 0px,#fffe00 200px,#ffea00 250px)"></i>
<i style="top:6px;left:0px;width:250px;background:linear-gradient(90deg,#b2ff00 0px,#fffe00 198px,#ffe900 250px)"></i>
<i style="top:8px;left:0px;width:250px;background:linear-gradient(90deg,#b2ff00 0px,#fffe00 197px,#ffe900 250px)"></i>
<i style="top:10px;left:0px;width:250px;background:linear-gradient(90deg,#b3ff00 0px,#fffe00 195px,#ffe800 250px)"></i>
<i style="top:12px;left:0px;width:250px;background:linear-gradient(90deg,#b3ff00 0px,#fffe00 194px,#ffe800 250px)"></i>
<i style="top:14px;left:0px;width:250px;background:linear-gradient(90deg,#b4ff00 0px,#fffe00 192px,#ffe700 250px)"></i>
<i style="top:16px;left:0px;width:250px;background:linear-gradient(90deg,#b4ff00 0px,#fffe00 191px,#ffe600 250px)"></i>
<i style="top:18px;left:0px;width:250px;background:linear-gradient(90deg,#b5ff00 0px,#fffe00 189px,#ffe600 250px)"></i>
<i style="top:20px;left:0px;width:250px;background:linear-gradient(90deg,#b5ff00 0px,#fffe00 188px,#ffe500 250px)"></i>
<i style="top:22px;left:0px;width:250px;background:linear-gradient(90deg,#b6ff00 0px,#fffe00 186px,#ffe500 250px)"></i>
<i style="top:24px;left:0px;width:250px;background:linear-gradient(90deg,#b6ff01 0px,#fffe00 185px,#ffe400 250px)"></i>
<i style="top:26px;left:0px;width:250px;background:linear-gradient(90deg,#b7ff01 0px,#fffe00 183px,#ffe400 250px)"></i>
<i style="top:28px;left:0px;width:250px;background:linear-gradient(90deg,#b7ff01 0px,#fffe00 182px,#ffe300 250px)"></i>
<i style="top:30px;left:0px;width:250px;background:linear-gradient(90deg,#b8ff01 0px,#fffe00 180px,#ffe200 250px)"></i>
<i style="top:32px;left:0px;width:250px;background:linear-gradient(90deg,#b8ff02 0px,#fffe00 179px,#ffe200 250px)"></i>
<i style="top:34px;left:0px;width:250px;background:linear-gradient(90deg,#b9ff02 0px,#e0ff00 101px,#fffe00 177px,#ffe100 250px)"></i>
<i style="top:36px;left:0px;width:250px;background:linear-gradient(90deg,#b9ff02 0px,#d8ff00 80px,#fffd00 176px,#ffe100 250px)"></i>
<i style="top:38px;left:0px;width:250px;background:linear-gradient(90deg,#baff02 0px,#d6ff00 73px,#fffe00 174px,#ffe000 250px)"></i>
<i style="top:40px;left:0px;width:250px;background:linear-gradient(90deg,#baff03 0px,#d6ff00 71px,#fffd00 173px,#ffe000 250px)"></i>
<i style="top:42px;left:0px;width:250px;background:linear-gradient(90deg,#bbff03 0px,#d6ff00 70px,#fffe00 171px,#ffdf00 250px)"></i>
<i style="top:44px;left:0px;width:250px;background:linear-gradient(90deg,#bbff03 0px,#d7ff00 71px,#fffd00 170px,#ffde00 250px)"></i>
<i style="top:46px;left:0px;width:250px;background:linear-gradient(90deg,#bcff04 0px,#d8ff00 72px,#fffe00 168px,#ffde00 250px)"></i>
<i style="top:48px;left:0px;width:250px;background:linear-gradient(90deg,#bcff04 0px,#d9ff00 73px,#fffe00 166px,#fd0 250px)"></i>
<i style="top:50px;left:0px;width:250px;background:linear-gradient(90deg,#bdff04 0px,#daff00 75px,#fffe00 165px,#fd0 250px)"></i>
<i style="top:52px;left:0px;width:250px;background:linear-gradient(90deg,#bdff04 0px,#dcff00 77px,#fffe00 163px,#ffdc00 250px)"></i>
<i style="top:54px;left:0px;width:250px;background:linear-gradient(90deg,#beff05 0px,#deff00 80px,#fffe00 162px,#ffdc00 250px)"></i>
<i style="top:56px;left:0px;width:250px;background:linear-gradient(90deg,#beff05 0px,#dfff00 82px,#fffe00 160px,#ffdb00 250px)"></i>
<i style="top:58px;left:0px;width:250px;background:linear-gradient(90deg,#bfff05 0px,#e1ff00 85px,#fffe00 159px,#ffdb00 250px)"></i>
<i style="top:60px;left:0px;width:250px;background:linear-gradient(90deg,#bfff06 0px,#e2ff00 87px,#fffe00 157px,#ffda00 250px)"></i>
<i style="top:62px;left:0px;width:250px;background:linear-gradient(90deg,#c0ff06 0px,#e4ff00 90px,#fffe00 156px,#ffd900 250px)"></i>
<i style="top:64px;left:0px;width:250px;background:linear-gradient(90deg,#c0ff06 0px,#e6ff00 92px,#fffe00 154px,#ffd900 250px)"></i>
<i style="top:66px;left:0px;width:250px;background:linear-gradient(90deg,#c1ff06 0px,#e8ff00 95px,#fffe00 153px,#ffd800 250px)"></i>
<i style="top:68px;left:0px;width:250px;background:linear-gradient(90deg,#c1ff07 0px,#e9ff00 98px,#fffe00 151px,#ffd800 250px)"></i>
<i style="top:70px;left:0px;width:250px;background:linear-gradient(90deg,#c2ff07 0px,#ebff00 101px,#fffe00 150px,#ffd700 250px)"></i>
<i style="top:72px;left:0px;width:250px;background:linear-gradient(90deg,#c3ff07 0px,#edff00 104px,#fffe00 148px,#ffd700 250px)"></i>
<i style="top:74px;left:0px;width:250px;background:linear-gradient(90deg,#c3ff08 0px,#efff00 107px,#fffe00 147px,#ffd600 250px)"></i>
<i style="top:76px;left:0px;width:250px;background:linear-gradient(90deg,#c4ff08 0px,#f1ff00 110px,#fffe00 145px,#ffd600 250px)"></i>
<i style="top:78px;left:0px;width:250px;background:linear-gradient(90deg,#c4ff08 0px,#f3ff00 113px,#fffd00 144px,#ffd500 250px)"></i>
<i style="top:80px;left:0px;width:250px;background:linear-gradient(90deg,#c5ff08 0px,#f5ff00 116px,#fffd00 143px,#ffd400 250px)"></i>
<i style="top:82px;left:0px;width:250px;background:linear-gradient(90deg,#c5ff09 0px,#f7ff00 119px,#fffd00 141px,#ffd400 250px)"></i>
<i style="top:84px;left:0px;width:250px;background:linear-gradient(90deg,#c6ff09 0px,#f9ff00 122px,#fffd00 140px,#ffd300 250px)"></i>
<i style="top:86px;left:0px;width:250px;background:linear-gradient(90deg,#c6ff09 0px,#fbff00 125px,#fffd00 140px,#ffd300 250px)"></i>
<i style="top:88px;left:0px;width:250px;background:linear-gradient(90deg,#c7ff0a 0px,#fdff00 128px,#fffb00 143px,#ffd200 250px)"></i>
<i style="top:90px;left:0px;width:250px;background:linear-gradient(90deg,#c7ff0a 0px,#ff0 131px,#ffd300 245px,#ffd200 250px)"></i>
<i style="top:92px;left:0px;width:250px;background:linear-gradient(90deg,#c8ff0a 0px,#fffe00 133px,#ffd300 244px,#ffd100 250px)"></i>
<i style="top:94px;left:0px;width:250px;background:linear-gradient(90deg,#c9ff0b 0px,#fffe00 131px,#ffd400 241px,#ffd100 250px)"></i>
<i style="top:96px;left:0px;width:250px;background:linear-gradient(90deg,#c9ff0b 0px,#fffe00 130px,#ffd300 240px,#ffd000 250px)"></i>
<i style="top:98px;left:0px;width:250px;background:linear-gradient(90deg,#caff0b 0px,#fffe00 128px,#ffd400 238px,#ffd000 250px)"></i>
<i style="top:100px;left:0px;width:250px;background:linear-gradient(90deg,#caff0b 0px,#fffe00 127px,#ffd300 237px,#ffcf00 250px)"></i>
<i style="top:102px;left:0px;width:250px;background:linear-gradient(90deg,#cbff0c 0px,#fffe00 125px,#ffd300 235px,#ffcf00 250px)"></i>
<i style="top:104px;left:0px;width:250px;background:linear-gradient(90deg,#cbff0c 0px,#fffe01 124px,#ffd300 234px,#ffce00 250px)"></i>
<i style="top:106px;left:0px;width:250px;background:linear-gradient(90deg,#ccff0c 0px,#fffe01 122px,#ffd300 232px,#ffcd00 250px)"></i>
<i style="top:108px;left:0px;width:250px;background:linear-gradient(90deg,#ccff0d 0px,#fffe02 121px,#ffd300 231px,#ffcd00 250px)"></i>
<i style="top:110px;left:0px;width:250px;background:linear-gradient(90deg,#cdff0d 0px,#fffe02 119px,#ffe100 190px,#fc0 250px)"></i>
<i style="top:112px;left:0px;width:250px;background:linear-gradient(90deg,#ceff0d 0px,#fffe03 118px,#ffe300 183px,#fc0 250px)"></i>
<i style="top:114px;left:0px;width:250px;background:linear-gradient(90deg,#ceff0e 0px,#fffe03 116px,#ffe400 180px,#ffcb00 250px)"></i>
<i style="top:116px;left:0px;width:250px;background:linear-gradient(90deg,#cfff0e 0px,#fffe04 115px,#ffe300 180px,#ffcb00 250px)"></i>
<i style="top:118px;left:0px;width:250px;background:linear-gradient(90deg,#cfff0e 0px,#fffe04 113px,#ffe200 181px,#ffca00 250px)"></i>
<i style="top:120px;left:0px;width:250px;background:linear-gradient(90deg,#d0ff0f 0px,#fffe04 112px,#ffe100 183px,#ffca00 250px)"></i>
<i style="top:122px;left:0px;width:250px;background:linear-gradient(90deg,#d1ff0f 0px,#fffe05 110px,#ffe000 184px,#ffc900 250px)"></i>
<i style="top:124px;left:0px;width:250px;background:linear-gradient(90deg,#d1ff0f 0px,#fffd05 109px,#ffde00 187px,#ffc900 250px)"></i>
<i style="top:126px;left:0px;width:250px;background:linear-gradient(90deg,#d2ff0f 0px,#fffe06 107px,#fd0 189px,#ffc800 250px)"></i>
<i style="top:128px;left:0px;width:250px;background:linear-gradient(90deg,#d2ff10 0px,#fffd06 106px,#ffdb00 192px,#ffc800 250px)"></i>
<i style="top:130px;left:0px;width:250px;background:linear-gradient(90deg,#d3ff10 0px,#fffe07 104px,#ffda00 194px,#ffc700 250px)"></i>
<i style="top:132px;left:0px;width:250px;background:linear-gradient(90deg,#d3ff10 0px,#fffe07 102px,#ffd800 197px,#ffc700 250px)"></i>
<i style="top:134px;left:0px;width:250px;background:linear-gradient(90deg,#d4ff11 0px,#fffe08 101px,#ffd600 200px,#ffc600 250px)"></i>
<i style="top:136px;left:0px;width:250px;background:linear-gradient(90deg,#d5ff11 0px,#fffe08 99px,#ffd500 203px,#ffc600 250px)"></i>
<i style="top:138px;left:0px;width:250px;background:linear-gradient(90deg,#d5ff11 0px,#fffe09 98px,#ffd300 206px,#ffc500 250px)"></i>
<i style="top:140px;left:0px;width:250px;background:linear-gradient(90deg,#d6ff12 0px,#fffe09 96px,#ffd300 204px,#ffc400 250px)"></i>
<i style="top:142px;left:0px;width:250px;background:linear-gradient(90deg,#d6ff12 0px,#fffe09 95px,#ffd300 203px,#ffc400 250px)"></i>
<i style="top:144px;left:0px;width:250px;background:linear-gradient(90deg,#d7ff12 0px,#fffe0a 93px,#ffd400 200px,#ffc300 250px)"></i>
<i style="top:146px;left:0px;width:250px;background:linear-gradient(90deg,#d8ff13 0px,#fffe0a 92px,#ffd300 199px,#ffc300 250px)"></i>
<i style="top:148px;left:0px;width:250px;background:linear-gradient(90deg,#d8ff13 0px,#fffe0b 90px,#ffd401 197px,#ffc200 250px)"></i>
<i style="top:150px;left:0px;width:250px;background:linear-gradient(90deg,#d9ff13 0px,#fffe0b 89px,#ffd301 196px,#ffc200 250px)"></i>
<i style="top:152px;left:0px;width:250px;background:linear-gradient(90deg,#d9ff14 0px,#fffe0c 87px,#ffd301 194px,#ffc100 250px)"></i>
<i style="top:154px;left:0px;width:250px;background:linear-gradient(90deg,#daff14 0px,#fffe0c 86px,#ffd302 193px,#ffc100 250px)"></i>
<i style="top:156px;left:0px;width:250px;background:linear-gradient(90deg,#dbff14 0px,#fffe0d 84px,#ffd302 191px,#ffc000 250px)"></i>
<i style="top:158px;left:0px;width:250px;background:linear-gradient(90deg,#dbff15 0px,#fffe0d 83px,#ffd302 190px,#ffc000 250px)"></i>
<i style="top:160px;left:0px;width:250px;background:linear-gradient(90deg,#dcff15 0px,#fffe0e 81px,#ffd403 187px,#ffbf00 250px)"></i>
<i style="top:162px;left:0px;width:250px;background:linear-gradient(90deg,#ddff15 0px,#fffe0e 80px,#ffd303 186px,#ffbf00 250px)"></i>
<i style="top:164px;left:0px;width:250px;background:linear-gradient(90deg,#ddff16 0px,#fffe0f 78px,#ffd304 184px,#ffbe00 250px)"></i>
<i style="top:166px;left:0px;width:250px;background:linear-gradient(90deg,#deff16 0px,#fffd0f 77px,#ffd304 183px,#ffbe00 250px)"></i>
<i style="top:168px;left:0px;width:250px;background:linear-gradient(90deg,#deff16 0px,#fffe10 75px,#ffd305 181px,#ffbd00 250px)"></i>
<i style="top:170px;left:0px;width:250px;background:linear-gradient(90deg,#dfff17 0px,#fffd10 74px,#ffd305 180px,#ffbd00 250px)"></i>
<i style="top:172px;left:0px;width:250px;background:linear-gradient(90deg,#e0ff17 0px,#fffe10 72px,#ffd305 178px,#ffbc00 250px)"></i>
<i style="top:174px;left:0px;width:250px;background:linear-gradient(90deg,#e0ff17 0px,#fffd11 71px,#ffd306 177px,#ffbc00 250px)"></i>
<i style="top:176px;left:0px;width:250px;background:linear-gradient(90deg,#e1ff18 0px,#fffe11 69px,#ffd306 174px,#fb0 250px)"></i>
<i style="top:178px;left:0px;width:250px;background:linear-gradient(90deg,#e2ff18 0px,#fffd12 68px,#ffd307 173px,#fb0 250px)"></i>
<i style="top:180px;left:0px;width:250px;background:linear-gradient(90deg,#e2ff18 0px,#fffe12 66px,#ffd307 171px,#ffba00 250px)"></i>
<i style="top:182px;left:0px;width:250px;background:linear-gradient(90deg,#e3ff19 0px,#fffd13 65px,#ffd307 170px,#ffba01 250px)"></i>
<i style="top:184px;left:0px;width:250px;background:linear-gradient(90deg,#e4ff19 0px,#fffe13 63px,#ffd308 168px,#ffb901 250px)"></i>
<i style="top:186px;left:0px;width:250px;background:linear-gradient(90deg,#e4ff19 0px,#fffe14 61px,#ffd308 166px,#ffb901 250px)"></i>
<i style="top:188px;left:0px;width:250px;background:linear-gradient(90deg,#e5ff1a 0px,#fffe14 60px,#ffd309 165px,#ffb801 250px)"></i>
<i style="top:190px;left:0px;width:250px;background:linear-gradient(90deg,#e5ff1a 0px,#fffe15 58px,#ffd409 162px,#ffb801 250px)"></i>
<i style="top:192px;left:0px;width:250px;background:linear-gradient(90deg,#e6ff1a 0px,#fffe15 57px,#ffd30a 161px,#ffb702 250px)"></i>
<i style="top:194px;left:0px;width:250px;background:linear-gradient(90deg,#e7ff1b 0px,#fffe16 55px,#ffd40a 159px,#ffb702 250px)"></i>
<i style="top:196px;left:0px;width:250px;background:linear-gradient(90deg,#e7ff1b 0px,#fffe16 54px,#ffd30a 158px,#ffb602 250px)"></i>
<i style="top:198px;left:0px;width:250px;background:linear-gradient(90deg,#e8ff1c 0px,#fffe17 52px,#ffd30b 156px,#ffb602 250px)"></i>
</div>
<svg width="1912" height="1040" viewBox="0 0 1912 1040" style="position:absolute;left:0;top:0;" font-family='"Liberation Sans", sans-serif'><defs></defs>
<path d="M1314.9 670.1L1314.9 670.1L1314.9 670.1L1314.8 670.1L1314.7 670.1L1314.7 670.2L1314.6 670.1L1314.5 670.1L1314.4 670.2L1314.3 670.2L1314.3 670.2L1314.2 670.2L1314.0 670.2L1313.9 670.2L1313.7 670.2L1313.6 670.2L1313.4 670.2L1313.2 670.2L1313.0 670.2L1312.8 670.1L1312.5 670.0L1312.2 669.9L1311.8 669.7L1311.3 669.5L1310.8 669.2L1310.3 668.9L1309.6 668.5L1308.9 668.1L1308.1 667.6L1307.3 667.0L1306.3 666.4L1305.2 665.7L1304.0 664.9L1302.7 664.0L1301.1 663.1L1299.4 662.0L1297.5 660.8L1295.5 659.5L1293.2 658.0L1290.8 656.3L1288.1 654.3L1285.3 652.1L1282.2 649.4L1278.8 646.0L1274.9 641.7L1270.5 636.3L1265.6 629.9L1260.4 622.2L1254.6 612.8L1248.2 601.6L1241.2 588.4L1233.6 572.9L1225.4 554.9L1216.9 534.2L1208.6 510.7L1200.4 484.6L1192.2 455.8L1184.5 425.1L1177.5 393.2L1171.7 360.9L1167.3 328.8L1164.3 297.7L1163.2 268.3L1164.1 240.9L1167.1 215.6L1172.3 193.3L1179.8 174.5L1189.2 159.6L1200.3 149.1L1212.8 142.6L1226.1 139.8L1240.0 140.2L1254.3 142.8L1268.9 146.9L1283.4 152.0L1297.7 157.7L1311.5 163.7L1325.0 170.0L1338.3 176.6L1351.4 183.5L1364.3 190.7L1377.3 198.2L1390.1 205.9L1402.9 213.9L1415.7 222.0L1428.4 230.4L1441.1 238.8L1453.9 247.4L1466.6 256.1L1479.3 264.9L1492.0 273.8L1504.7 282.7L1517.4 291.6L1530.1 300.5L1542.6 309.5L1555.2 318.4L1567.6 327.3L1579.9 336.1L1592.1 344.8L1604.2 353.5L1616.1 362.0L1627.7 370.3L1639.2 378.5L1650.4 386.5L1661.3 394.3L1671.8 401.9L1682.1 409.2L1691.9 416.3L1701.1 422.9L1709.8 429.1L1718.0 435.0L1725.9 440.6L1733.3 446.0L1740.2 450.9L1746.6 455.4L1752.5 459.6L1757.9 463.5L1762.9 467.1L1767.4 470.3L1771.6 473.3L1775.4 476.0L1778.8 478.5L1782.0 480.8L1784.9 482.8L1787.5 484.7L1790.0 486.5L1792.3 488.1L1794.4 489.6L1796.4 491.1L1798.2 492.4L1799.9 493.6L1801.4 494.7L1802.8 495.7L1804.0 496.5L1805.1 497.3L1806.1 498.0L1806.9 498.6L1807.7 499.2L1808.4 499.7L1809.1 500.1L1809.6 500.5L1810.0 500.9L1810.4 501.1L1810.8 501.4L1811.1 501.6L1811.4 501.8L1811.7 502.0L1811.9 502.2L1812.2 502.4L1812.4 502.6L1812.7 502.7L1812.9 502.9L1813.1 503.1L1813.3 503.2L1813.4 503.3L1813.5 503.4L1813.6 503.4L1813.7 503.5L1813.7 503.5L1813.8 503.5L1813.8 503.6z M1729.5 462.2L1427.0 289.4L1293.5 634.9z" fill="#000" fill-rule="evenodd" fill-opacity="0.4"/>
<path d="M1649.5 145.2H1899.1V323.7L1649.5 165.8z" fill="#000" fill-opacity="0.4"/>
<rect x="1161.1" y="136.3" width="746.8" height="1.8" fill="#b0b0b0"/>
<rect x="1161.1" y="671.3" width="746.8" height="1.8" fill="#b0b0b0"/>
<rect x="1161.1" y="136.3" width="1.9" height="536.8" fill="#b0b0b0"/>
<rect x="1906.3" y="136.3" width="1.8" height="536.8" fill="#b0b0b0"/>
<path d="M1644.7 138.1H1904.6V348.8H1644.7z M1649.4 145.1V344.1H1899.2V145.1z" fill="#343434" fill-rule="evenodd"/>
<rect x="1648.6" y="144.3" width="251.4" height="200.6" fill="none" stroke="#9a9a9a" stroke-width="1.2"/>
<rect x="1487.8" y="453.2" width="15.6" height="15.6" fill="none" stroke="#fff" stroke-width="1.6"/>
<rect x="1547.7" y="453.2" width="15.6" height="15.6" fill="none" stroke="#fff" stroke-width="1.6"/>
<rect x="1600.7" y="453.2" width="15.6" height="15.6" fill="none" stroke="#fff" stroke-width="1.6"/>
<rect x="1656.7" y="453.2" width="15.6" height="15.6" fill="none" stroke="#fff" stroke-width="1.6"/>
<rect x="1721.2" y="453.2" width="15.6" height="15.6" fill="none" stroke="#fff" stroke-width="1.6"/>
<rect x="1428.6" y="419.2" width="15.6" height="15.6" fill="none" stroke="#fff" stroke-width="1.6"/>
<rect x="1426.7" y="385.5" width="15.6" height="15.6" fill="none" stroke="#fff" stroke-width="1.6"/>
<rect x="1423.7" y="352.6" width="15.6" height="15.6" fill="none" stroke="#fff" stroke-width="1.6"/>
<rect x="1422.2" y="318.2" width="15.6" height="15.6" fill="none" stroke="#fff" stroke-width="1.6"/>
<rect x="1418.7" y="281.2" width="15.6" height="15.6" fill="none" stroke="#fff" stroke-width="1.6"/>
<rect x="1401.8" y="489.2" width="15.6" height="15.6" fill="none" stroke="#fff" stroke-width="1.6"/>
<rect x="1373.7" y="523.1" width="15.6" height="15.6" fill="none" stroke="#fff" stroke-width="1.6"/>
<rect x="1345.7" y="555.6" width="15.6" height="15.6" fill="none" stroke="#fff" stroke-width="1.6"/>
<rect x="1317.2" y="588.1" width="15.6" height="15.6" fill="none" stroke="#fff" stroke-width="1.6"/>
<rect x="1285.8" y="625.3" width="15.6" height="15.6" fill="none" stroke="#fff" stroke-width="1.6"/>
<rect x="1416.1" y="454.7" width="15.6" height="15.6" fill="none" stroke="#fff" stroke-width="1.6"/>
<rect x="1400.2" y="454.7" width="15.6" height="15.6" fill="none" stroke="#fff" stroke-width="1.6"/>
<rect x="1384.2" y="454.7" width="15.6" height="15.6" fill="none" stroke="#fff" stroke-width="1.6"/>
<rect x="1368.6" y="454.7" width="15.6" height="15.6" fill="none" stroke="#fff" stroke-width="1.6"/>
<rect x="1352.6" y="454.7" width="15.6" height="15.6" fill="none" stroke="#fff" stroke-width="1.6"/>
<rect x="1433.2" y="477.3" width="15.6" height="15.6" fill="none" stroke="#fff" stroke-width="1.6"/>
<rect x="1434.8" y="500.5" width="15.6" height="15.6" fill="none" stroke="#fff" stroke-width="1.6"/>
<rect x="1434.8" y="520.2" width="15.6" height="15.6" fill="none" stroke="#fff" stroke-width="1.6"/>
<rect x="1436.2" y="542.3" width="15.6" height="15.6" fill="none" stroke="#fff" stroke-width="1.6"/>
<rect x="1437.7" y="566.2" width="15.6" height="15.6" fill="none" stroke="#fff" stroke-width="1.6"/>
<rect x="1450.6" y="431.2" width="15.6" height="15.6" fill="none" stroke="#fff" stroke-width="1.6"/>
<rect x="1469.2" y="407.2" width="15.6" height="15.6" fill="none" stroke="#fff" stroke-width="1.6"/>
<rect x="1487.7" y="386.7" width="15.6" height="15.6" fill="none" stroke="#fff" stroke-width="1.6"/>
<rect x="1505.2" y="366.2" width="15.6" height="15.6" fill="none" stroke="#fff" stroke-width="1.6"/>
<rect x="1525.7" y="342.2" width="15.6" height="15.6" fill="none" stroke="#fff" stroke-width="1.6"/>
<rect x="1765" y="236.1" width="15.6" height="15.6" fill="none" stroke="#fff" stroke-width="1.6"/>
<rect x="1432.1" y="455" width="15" height="15" fill="none" stroke="#000" stroke-width="1.9"/>
<circle cx="1487.5" cy="464" r="4.9" fill="#c49696" stroke="#000" stroke-width="1.2"/>
<circle cx="1429.5" cy="426.9" r="4.9" fill="#96ba96" stroke="#000" stroke-width="1.2"/>
<circle cx="1401.3" cy="503.9" r="4.9" fill="#9696be" stroke="#000" stroke-width="1.2"/>
<circle cx="1415.6" cy="465.4" r="4.9" fill="#96bab6" stroke="#000" stroke-width="1.2"/>
<circle cx="1431.5" cy="490.9" r="4.9" fill="#be96ba" stroke="#000" stroke-width="1.2"/>
<circle cx="1450.6" cy="439" r="4.9" fill="#c0bc96" stroke="#000" stroke-width="1.2"/>
<circle cx="1555.6" cy="464" r="4.9" fill="#c47d7d" stroke="#000" stroke-width="1.2"/>
<circle cx="1428.5" cy="388.5" r="4.9" fill="#7dba7d" stroke="#000" stroke-width="1.2"/>
<circle cx="1373.5" cy="540.9" r="4.9" fill="#7d7dbe" stroke="#000" stroke-width="1.2"/>
<circle cx="1401.5" cy="465.4" r="4.9" fill="#7dbab6" stroke="#000" stroke-width="1.2"/>
<circle cx="1433.5" cy="515.8" r="4.9" fill="#be7dba" stroke="#000" stroke-width="1.2"/>
<circle cx="1470.4" cy="412.1" r="4.9" fill="#c0bc7d" stroke="#000" stroke-width="1.2"/>
<circle cx="1613.5" cy="462" r="4.9" fill="#c46464" stroke="#000" stroke-width="1.2"/>
<circle cx="1428.5" cy="351.5" r="4.9" fill="#64ba64" stroke="#000" stroke-width="1.2"/>
<circle cx="1347.1" cy="577.1" r="4.9" fill="#6464be" stroke="#000" stroke-width="1.2"/>
<circle cx="1386.5" cy="465.4" r="4.9" fill="#64bab6" stroke="#000" stroke-width="1.2"/>
<circle cx="1433.5" cy="537.9" r="4.9" fill="#be64ba" stroke="#000" stroke-width="1.2"/>
<circle cx="1489.5" cy="387.1" r="4.9" fill="#c0bc64" stroke="#000" stroke-width="1.2"/>
<circle cx="1674.5" cy="461" r="4.9" fill="#c44646" stroke="#000" stroke-width="1.2"/>
<circle cx="1426.5" cy="317.5" r="4.9" fill="#46ba46" stroke="#000" stroke-width="1.2"/>
<circle cx="1323.5" cy="609.1" r="4.9" fill="#4646be" stroke="#000" stroke-width="1.2"/>
<circle cx="1373.8" cy="465.4" r="4.9" fill="#46bab6" stroke="#000" stroke-width="1.2"/>
<circle cx="1433.5" cy="561.9" r="4.9" fill="#be46ba" stroke="#000" stroke-width="1.2"/>
<circle cx="1506.5" cy="365" r="4.9" fill="#c0bc46" stroke="#000" stroke-width="1.2"/>
<circle cx="1729" cy="461" r="4.9" fill="#ca0000" stroke="#000" stroke-width="1.2"/>
<circle cx="1426.3" cy="286" r="4.9" fill="#00a500" stroke="#000" stroke-width="1.2"/>
<circle cx="1301.5" cy="637.5" r="4.9" fill="#0000c8" stroke="#000" stroke-width="1.2"/>
<circle cx="1362.5" cy="466.9" r="4.9" fill="#00bebe" stroke="#000" stroke-width="1.2"/>
<circle cx="1434.5" cy="582.8" r="4.9" fill="#c800b4" stroke="#000" stroke-width="1.2"/>
<circle cx="1523.5" cy="340.9" r="4.9" fill="#c0b400" stroke="#000" stroke-width="1.2"/>
<circle cx="1433.5" cy="462.5" r="4.9" fill="#ffffff" stroke="#000" stroke-width="1.2"/>
<circle cx="1722.5" cy="196.5" r="4.9" fill="#c8ba00" stroke="#000" stroke-width="1.2"/>
</svg>
</body></html>
